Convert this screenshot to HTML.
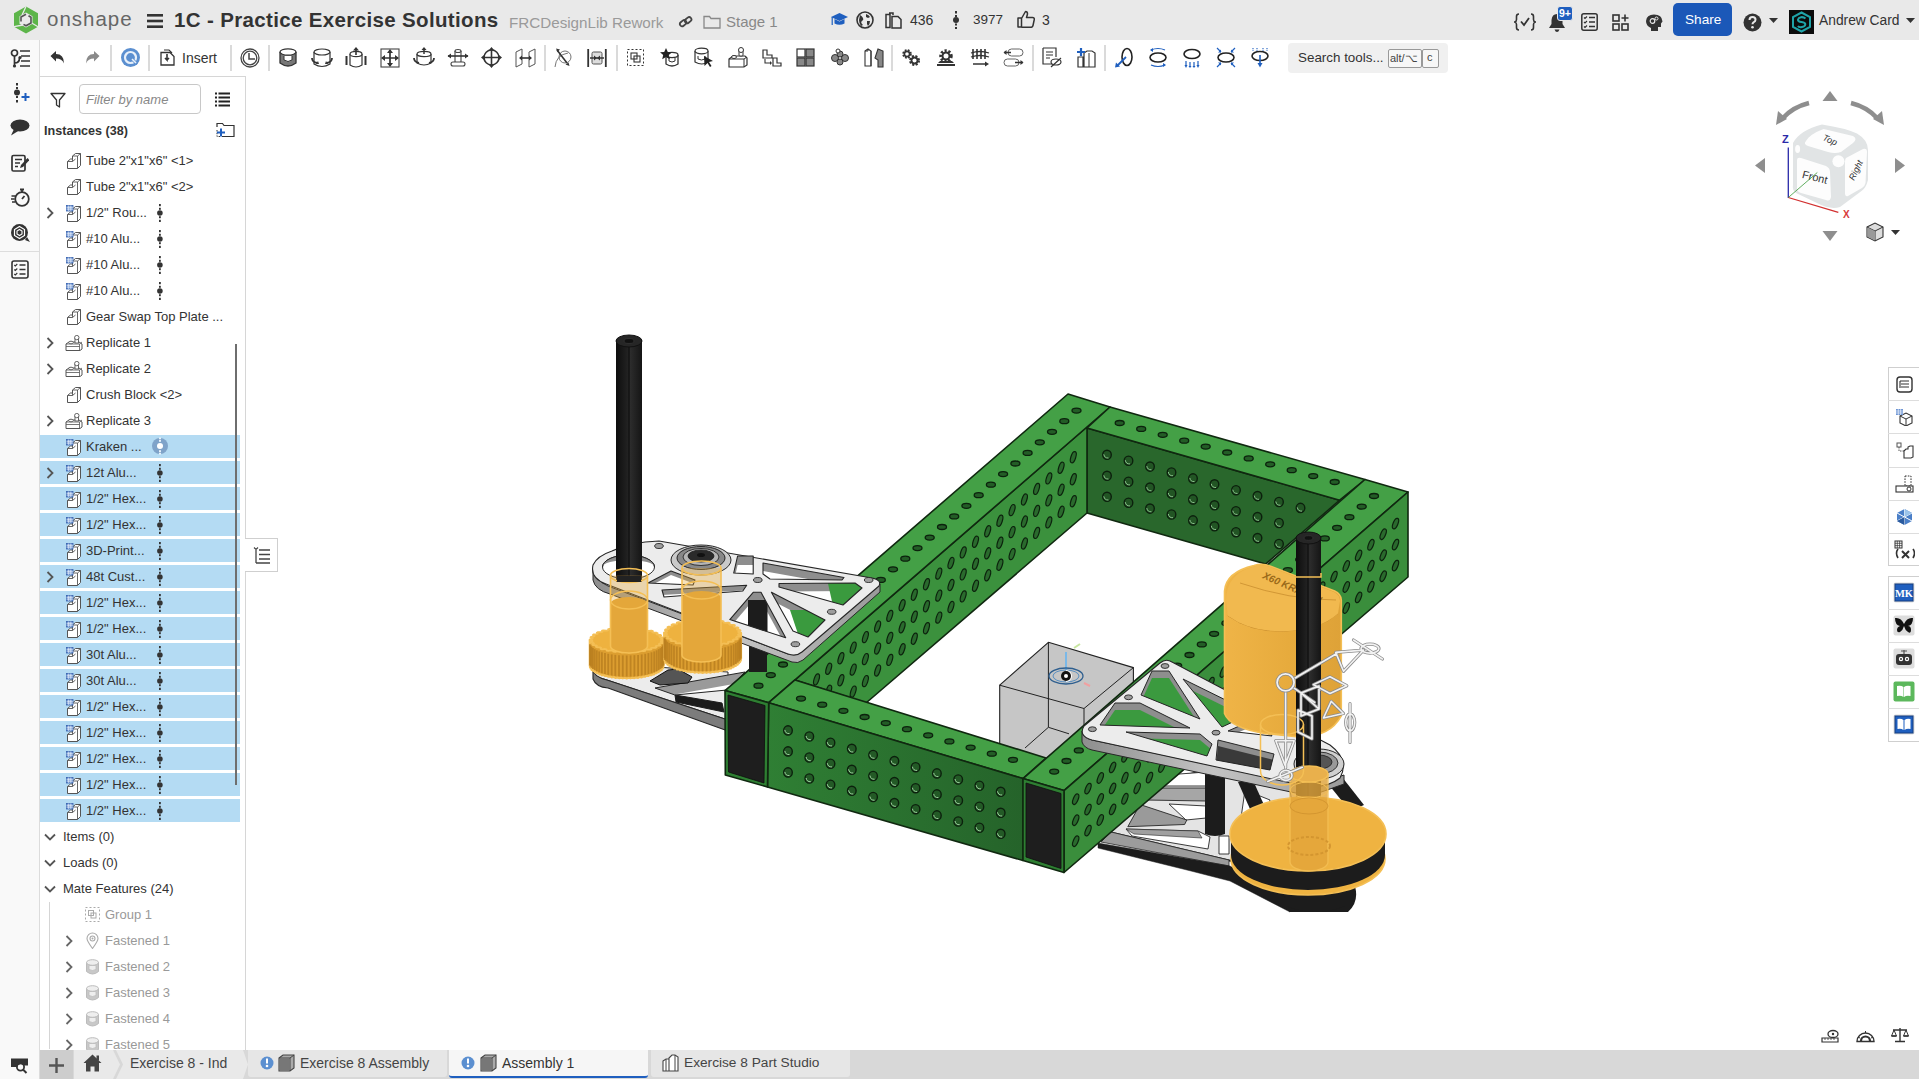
<!DOCTYPE html>
<html><head><meta charset="utf-8">
<style>
*{box-sizing:border-box;margin:0;padding:0}
html,body{width:1919px;height:1079px;overflow:hidden;background:#fff;font-family:"Liberation Sans",sans-serif;color:#333}
.a{position:absolute}
#top{left:0;top:0;width:1919px;height:40px;background:#e9e9e9}
#strip{left:0;top:40px;width:40px;height:1039px;background:#f9f9f9;border-right:1px solid #dcdcdc}
#panel{left:40px;top:76px;width:206px;height:974px;background:#fff;border-top:1px solid #d6d6d6;border-right:1px solid #d6d6d6}
#bot{left:40px;top:1050px;width:1879px;height:29px;background:#d8d8d8}
.t{position:absolute;white-space:nowrap;line-height:1}
.sep{position:absolute;top:45px;width:2px;height:26px;background:#dadada}
.row{position:absolute;left:40px;width:200px;height:23px}
.sel{background:#b4dbf3}
.rt{position:absolute;left:86px;font-size:13px;color:#333;white-space:nowrap;line-height:1}
</style></head><body>
<div id="top" class="a"></div>
<div id="strip" class="a"></div>
<div id="panel" class="a"></div>
<div id="bot" class="a"></div>
<svg class="a" style="left:0;top:0" width="1919" height="1079" viewBox="0 0 1919 1079">
<defs>
<linearGradient id="gf" x1="0" y1="0" x2="1" y2="0"><stop offset="0" stop-color="#2f7f34"/><stop offset="1" stop-color="#25632a"/></linearGradient>
<linearGradient id="gside" x1="0" y1="0" x2="1" y2="0"><stop offset="0" stop-color="#8e8e8e"/><stop offset="0.5" stop-color="#c4c4c4"/><stop offset="1" stop-color="#9a9a9a"/></linearGradient>
<linearGradient id="gshaft" x1="0" y1="0" x2="1" y2="0"><stop offset="0" stop-color="#0d0d0d"/><stop offset="0.45" stop-color="#222"/><stop offset="0.55" stop-color="#2c2c2c"/><stop offset="1" stop-color="#151515"/></linearGradient>
<linearGradient id="gmot" x1="0" y1="0" x2="1" y2="0"><stop offset="0" stop-color="#efb447"/><stop offset="0.6" stop-color="#e6aa3c"/><stop offset="1" stop-color="#dea238"/></linearGradient>
</defs>
<path d="M1096,840 L1232,862 Q1262,880 1290,912 L1348,912 Q1362,900 1352,878 L1300,866 L1232,858 L1100,838 Z" fill="#1c1c1c" stroke="none" stroke-width="1" stroke-linejoin="round" />
<path d="M1325,780 L1342,777 L1364,805 L1350,811 Z" fill="#1c1c1c" stroke="none" stroke-width="1" stroke-linejoin="round" />
<polygon points="1070.0,800.0 1206.0,770.0 1290.0,790.0 1300.0,862.0 1229.0,860.0 1111.0,832.0 1070.0,822.0" fill="#e4e4e4" stroke="#262626" stroke-width="1" stroke-linejoin="round" />
<polygon points="1111.0,832.0 1229.0,860.0 1229.0,866.0 1101.0,842.0" fill="#9c9c9c" stroke="#262626" stroke-width="0.8" stroke-linejoin="round" />
<polygon points="1098.0,843.0 1230.0,866.0 1290.0,900.0 1290.0,912.0 1230.0,881.0 1191.0,871.0 1098.0,848.0" fill="#1c1c1c" stroke="#1c1c1c" stroke-width="0.5" stroke-linejoin="round" />
<polygon points="1166.0,775.0 1206.0,772.0 1206.0,786.0 1160.0,786.0" fill="#ffffff" stroke="#262626" stroke-width="0.9" stroke-linejoin="round" />
<polygon points="1150.0,788.0 1206.0,788.0 1206.0,801.0 1145.0,800.0" fill="#a6a6a6" stroke="#262626" stroke-width="0.9" stroke-linejoin="round" />
<polygon points="1169.0,804.0 1206.0,806.0 1206.0,818.0 1186.0,820.0" fill="#ffffff" stroke="#262626" stroke-width="0.9" stroke-linejoin="round" />
<polygon points="1140.0,804.5 1186.8,820.0 1184.6,824.5 1127.8,826.7" fill="#9a9a9a" stroke="#262626" stroke-width="0.9" stroke-linejoin="round" />
<polygon points="1126.0,829.0 1198.0,831.0 1210.0,837.0 1208.0,849.0 1132.0,836.0" fill="#ffffff" stroke="#262626" stroke-width="0.9" stroke-linejoin="round" />
<polygon points="1126.0,829.0 1198.0,831.0 1202.0,838.0 1134.0,834.0" fill="#a0a0a0" stroke="#262626" stroke-width="0.6" stroke-linejoin="round" />
<polygon points="1219.0,836.0 1229.0,836.0 1229.0,854.0 1219.0,854.0" fill="#ffffff" stroke="#262626" stroke-width="0.9" stroke-linejoin="round" />
<polygon points="1245.0,790.0 1270.0,800.0 1262.0,830.0 1240.0,825.0" fill="#ffffff" stroke="#262626" stroke-width="0.9" stroke-linejoin="round" />
<path d="M612,664 L728,672 L728,720 L607,680 Q592,676 593,670 Q596,664 612,664 Z" fill="#ececec" stroke="#262626" stroke-width="1" stroke-linejoin="round" />
<path d="M593,670 L593,679 Q596,687 608,688 L728,731 L728,720 L607,680 Q594,677 593,670 Z" fill="#7c7c7c" stroke="#262626" stroke-width="1.1" stroke-linejoin="round" />
<clipPath id="c1"><polygon points="655.0,688.0 745.0,672.0 727.0,690.0 675.0,695.0"/></clipPath>
<polygon points="655.0,688.0 745.0,672.0 727.0,690.0 675.0,695.0" fill="#9a9a9a"/>
<g clip-path="url(#c1)">
<polygon points="655.0,698.0 745.0,682.0 727.0,700.0 675.0,705.0" fill="#ffffff"/>
</g>
<polygon points="655.0,688.0 745.0,672.0 727.0,690.0 675.0,695.0" fill="none" stroke="#262626" stroke-width="1" stroke-linejoin="round"/>
<polygon points="675.0,695.0 722.0,703.0 724.0,712.0 676.0,702.0" fill="#1c1c1c" stroke="#1c1c1c" stroke-width="1" stroke-linejoin="round" />
<polygon points="650.0,681.0 668.0,670.0 678.0,669.0 692.0,677.0 688.0,683.0 660.0,685.0" fill="#555" stroke="#111" stroke-width="1" stroke-linejoin="round" />
<polygon points="1087.0,428.0 1339.7,500.2 1265.6,564.1 1087.0,513.0" fill="#29672c" stroke="#102810" stroke-width="1.6" stroke-linejoin="round" />
<ellipse cx="1107.0" cy="454.8" rx="4.3" ry="4.6" fill="#225524" stroke="#0c200d" stroke-width="1.4" />
<path d="M1103.8,454.3 Q1104.5,458.3 1108.5,458.0" fill="none" stroke="#8cc08e" stroke-width="1"/>
<ellipse cx="1107.0" cy="475.8" rx="4.3" ry="4.6" fill="#225524" stroke="#0c200d" stroke-width="1.4" />
<path d="M1103.8,475.3 Q1104.5,479.3 1108.5,479.0" fill="none" stroke="#8cc08e" stroke-width="1"/>
<ellipse cx="1107.0" cy="496.8" rx="4.3" ry="4.6" fill="#225524" stroke="#0c200d" stroke-width="1.4" />
<path d="M1103.8,496.3 Q1104.5,500.3 1108.5,500.0" fill="none" stroke="#8cc08e" stroke-width="1"/>
<ellipse cx="1128.5" cy="460.7" rx="4.3" ry="4.6" fill="#225524" stroke="#0c200d" stroke-width="1.4" />
<path d="M1125.3,460.2 Q1126.0,464.2 1130.0,463.9" fill="none" stroke="#8cc08e" stroke-width="1"/>
<ellipse cx="1128.5" cy="481.7" rx="4.3" ry="4.6" fill="#225524" stroke="#0c200d" stroke-width="1.4" />
<path d="M1125.3,481.2 Q1126.0,485.2 1130.0,484.9" fill="none" stroke="#8cc08e" stroke-width="1"/>
<ellipse cx="1128.5" cy="502.7" rx="4.3" ry="4.6" fill="#225524" stroke="#0c200d" stroke-width="1.4" />
<path d="M1125.3,502.2 Q1126.0,506.2 1130.0,505.9" fill="none" stroke="#8cc08e" stroke-width="1"/>
<ellipse cx="1150.0" cy="466.6" rx="4.3" ry="4.6" fill="#225524" stroke="#0c200d" stroke-width="1.4" />
<path d="M1146.8,466.1 Q1147.5,470.1 1151.5,469.8" fill="none" stroke="#8cc08e" stroke-width="1"/>
<ellipse cx="1150.0" cy="487.6" rx="4.3" ry="4.6" fill="#225524" stroke="#0c200d" stroke-width="1.4" />
<path d="M1146.8,487.1 Q1147.5,491.1 1151.5,490.8" fill="none" stroke="#8cc08e" stroke-width="1"/>
<ellipse cx="1150.0" cy="508.6" rx="4.3" ry="4.6" fill="#225524" stroke="#0c200d" stroke-width="1.4" />
<path d="M1146.8,508.1 Q1147.5,512.1 1151.5,511.8" fill="none" stroke="#8cc08e" stroke-width="1"/>
<ellipse cx="1171.5" cy="472.5" rx="4.3" ry="4.6" fill="#225524" stroke="#0c200d" stroke-width="1.4" />
<path d="M1168.3,472.0 Q1169.0,476.0 1173.0,475.7" fill="none" stroke="#8cc08e" stroke-width="1"/>
<ellipse cx="1171.5" cy="493.5" rx="4.3" ry="4.6" fill="#225524" stroke="#0c200d" stroke-width="1.4" />
<path d="M1168.3,493.0 Q1169.0,497.0 1173.0,496.7" fill="none" stroke="#8cc08e" stroke-width="1"/>
<ellipse cx="1171.5" cy="514.5" rx="4.3" ry="4.6" fill="#225524" stroke="#0c200d" stroke-width="1.4" />
<path d="M1168.3,514.0 Q1169.0,518.0 1173.0,517.7" fill="none" stroke="#8cc08e" stroke-width="1"/>
<ellipse cx="1193.0" cy="478.4" rx="4.3" ry="4.6" fill="#225524" stroke="#0c200d" stroke-width="1.4" />
<path d="M1189.8,477.9 Q1190.5,481.9 1194.5,481.6" fill="none" stroke="#8cc08e" stroke-width="1"/>
<ellipse cx="1193.0" cy="499.4" rx="4.3" ry="4.6" fill="#225524" stroke="#0c200d" stroke-width="1.4" />
<path d="M1189.8,498.9 Q1190.5,502.9 1194.5,502.6" fill="none" stroke="#8cc08e" stroke-width="1"/>
<ellipse cx="1193.0" cy="520.4" rx="4.3" ry="4.6" fill="#225524" stroke="#0c200d" stroke-width="1.4" />
<path d="M1189.8,519.9 Q1190.5,523.9 1194.5,523.6" fill="none" stroke="#8cc08e" stroke-width="1"/>
<ellipse cx="1214.5" cy="484.3" rx="4.3" ry="4.6" fill="#225524" stroke="#0c200d" stroke-width="1.4" />
<path d="M1211.3,483.8 Q1212.0,487.8 1216.0,487.5" fill="none" stroke="#8cc08e" stroke-width="1"/>
<ellipse cx="1214.5" cy="505.3" rx="4.3" ry="4.6" fill="#225524" stroke="#0c200d" stroke-width="1.4" />
<path d="M1211.3,504.8 Q1212.0,508.8 1216.0,508.5" fill="none" stroke="#8cc08e" stroke-width="1"/>
<ellipse cx="1214.5" cy="526.3" rx="4.3" ry="4.6" fill="#225524" stroke="#0c200d" stroke-width="1.4" />
<path d="M1211.3,525.8 Q1212.0,529.8 1216.0,529.5" fill="none" stroke="#8cc08e" stroke-width="1"/>
<ellipse cx="1236.0" cy="490.2" rx="4.3" ry="4.6" fill="#225524" stroke="#0c200d" stroke-width="1.4" />
<path d="M1232.8,489.7 Q1233.5,493.7 1237.5,493.4" fill="none" stroke="#8cc08e" stroke-width="1"/>
<ellipse cx="1236.0" cy="511.2" rx="4.3" ry="4.6" fill="#225524" stroke="#0c200d" stroke-width="1.4" />
<path d="M1232.8,510.7 Q1233.5,514.7 1237.5,514.4" fill="none" stroke="#8cc08e" stroke-width="1"/>
<ellipse cx="1236.0" cy="532.2" rx="4.3" ry="4.6" fill="#225524" stroke="#0c200d" stroke-width="1.4" />
<path d="M1232.8,531.7 Q1233.5,535.7 1237.5,535.4" fill="none" stroke="#8cc08e" stroke-width="1"/>
<ellipse cx="1257.5" cy="496.1" rx="4.3" ry="4.6" fill="#225524" stroke="#0c200d" stroke-width="1.4" />
<path d="M1254.3,495.6 Q1255.0,499.6 1259.0,499.3" fill="none" stroke="#8cc08e" stroke-width="1"/>
<ellipse cx="1257.5" cy="517.1" rx="4.3" ry="4.6" fill="#225524" stroke="#0c200d" stroke-width="1.4" />
<path d="M1254.3,516.6 Q1255.0,520.6 1259.0,520.3" fill="none" stroke="#8cc08e" stroke-width="1"/>
<ellipse cx="1257.5" cy="538.1" rx="4.3" ry="4.6" fill="#225524" stroke="#0c200d" stroke-width="1.4" />
<path d="M1254.3,537.6 Q1255.0,541.6 1259.0,541.3" fill="none" stroke="#8cc08e" stroke-width="1"/>
<ellipse cx="1279.0" cy="502.0" rx="4.3" ry="4.6" fill="#225524" stroke="#0c200d" stroke-width="1.4" />
<path d="M1275.8,501.5 Q1276.5,505.5 1280.5,505.2" fill="none" stroke="#8cc08e" stroke-width="1"/>
<ellipse cx="1279.0" cy="523.0" rx="4.3" ry="4.6" fill="#225524" stroke="#0c200d" stroke-width="1.4" />
<path d="M1275.8,522.5 Q1276.5,526.5 1280.5,526.2" fill="none" stroke="#8cc08e" stroke-width="1"/>
<ellipse cx="1279.0" cy="544.0" rx="4.3" ry="4.6" fill="#225524" stroke="#0c200d" stroke-width="1.4" />
<path d="M1275.8,543.5 Q1276.5,547.5 1280.5,547.2" fill="none" stroke="#8cc08e" stroke-width="1"/>
<ellipse cx="1300.5" cy="507.9" rx="4.3" ry="4.6" fill="#225524" stroke="#0c200d" stroke-width="1.4" />
<path d="M1297.3,507.4 Q1298.0,511.4 1302.0,511.1" fill="none" stroke="#8cc08e" stroke-width="1"/>
<polygon points="795.0,679.9 1087.0,426.9 1087.0,513.0 866.0,703.0" fill="#3b913d" stroke="#102810" stroke-width="1.6" stroke-linejoin="round" />
<ellipse cx="1073.3" cy="457.2" rx="2.4" ry="5.8" fill="#2a6a2d" stroke="#0c220d" stroke-width="1.2" transform="rotate(18 1073.3 457.2)" />
<ellipse cx="1073.3" cy="479.2" rx="2.4" ry="5.8" fill="#2a6a2d" stroke="#0c220d" stroke-width="1.2" transform="rotate(18 1073.3 479.2)" />
<ellipse cx="1073.3" cy="501.2" rx="2.4" ry="5.8" fill="#2a6a2d" stroke="#0c220d" stroke-width="1.2" transform="rotate(18 1073.3 501.2)" />
<ellipse cx="1061.1" cy="467.8" rx="2.4" ry="5.8" fill="#2a6a2d" stroke="#0c220d" stroke-width="1.2" transform="rotate(18 1061.1 467.8)" />
<ellipse cx="1061.1" cy="489.8" rx="2.4" ry="5.8" fill="#2a6a2d" stroke="#0c220d" stroke-width="1.2" transform="rotate(18 1061.1 489.8)" />
<ellipse cx="1061.1" cy="511.8" rx="2.4" ry="5.8" fill="#2a6a2d" stroke="#0c220d" stroke-width="1.2" transform="rotate(18 1061.1 511.8)" />
<ellipse cx="1048.8" cy="478.4" rx="2.4" ry="5.8" fill="#2a6a2d" stroke="#0c220d" stroke-width="1.2" transform="rotate(18 1048.8 478.4)" />
<ellipse cx="1048.8" cy="500.4" rx="2.4" ry="5.8" fill="#2a6a2d" stroke="#0c220d" stroke-width="1.2" transform="rotate(18 1048.8 500.4)" />
<ellipse cx="1048.8" cy="522.4" rx="2.4" ry="5.8" fill="#2a6a2d" stroke="#0c220d" stroke-width="1.2" transform="rotate(18 1048.8 522.4)" />
<ellipse cx="1036.6" cy="488.9" rx="2.4" ry="5.8" fill="#2a6a2d" stroke="#0c220d" stroke-width="1.2" transform="rotate(18 1036.6 488.9)" />
<ellipse cx="1036.6" cy="510.9" rx="2.4" ry="5.8" fill="#2a6a2d" stroke="#0c220d" stroke-width="1.2" transform="rotate(18 1036.6 510.9)" />
<ellipse cx="1036.6" cy="532.9" rx="2.4" ry="5.8" fill="#2a6a2d" stroke="#0c220d" stroke-width="1.2" transform="rotate(18 1036.6 532.9)" />
<ellipse cx="1024.4" cy="499.5" rx="2.4" ry="5.8" fill="#2a6a2d" stroke="#0c220d" stroke-width="1.2" transform="rotate(18 1024.4 499.5)" />
<ellipse cx="1024.4" cy="521.5" rx="2.4" ry="5.8" fill="#2a6a2d" stroke="#0c220d" stroke-width="1.2" transform="rotate(18 1024.4 521.5)" />
<ellipse cx="1024.4" cy="543.5" rx="2.4" ry="5.8" fill="#2a6a2d" stroke="#0c220d" stroke-width="1.2" transform="rotate(18 1024.4 543.5)" />
<ellipse cx="1012.1" cy="510.1" rx="2.4" ry="5.8" fill="#2a6a2d" stroke="#0c220d" stroke-width="1.2" transform="rotate(18 1012.1 510.1)" />
<ellipse cx="1012.1" cy="532.1" rx="2.4" ry="5.8" fill="#2a6a2d" stroke="#0c220d" stroke-width="1.2" transform="rotate(18 1012.1 532.1)" />
<ellipse cx="1012.1" cy="554.1" rx="2.4" ry="5.8" fill="#2a6a2d" stroke="#0c220d" stroke-width="1.2" transform="rotate(18 1012.1 554.1)" />
<ellipse cx="999.9" cy="520.7" rx="2.4" ry="5.8" fill="#2a6a2d" stroke="#0c220d" stroke-width="1.2" transform="rotate(18 999.9 520.7)" />
<ellipse cx="999.9" cy="542.7" rx="2.4" ry="5.8" fill="#2a6a2d" stroke="#0c220d" stroke-width="1.2" transform="rotate(18 999.9 542.7)" />
<ellipse cx="999.9" cy="564.7" rx="2.4" ry="5.8" fill="#2a6a2d" stroke="#0c220d" stroke-width="1.2" transform="rotate(18 999.9 564.7)" />
<ellipse cx="987.7" cy="531.3" rx="2.4" ry="5.8" fill="#2a6a2d" stroke="#0c220d" stroke-width="1.2" transform="rotate(18 987.7 531.3)" />
<ellipse cx="987.7" cy="553.3" rx="2.4" ry="5.8" fill="#2a6a2d" stroke="#0c220d" stroke-width="1.2" transform="rotate(18 987.7 553.3)" />
<ellipse cx="987.7" cy="575.3" rx="2.4" ry="5.8" fill="#2a6a2d" stroke="#0c220d" stroke-width="1.2" transform="rotate(18 987.7 575.3)" />
<ellipse cx="975.5" cy="541.8" rx="2.4" ry="5.8" fill="#2a6a2d" stroke="#0c220d" stroke-width="1.2" transform="rotate(18 975.5 541.8)" />
<ellipse cx="975.5" cy="563.8" rx="2.4" ry="5.8" fill="#2a6a2d" stroke="#0c220d" stroke-width="1.2" transform="rotate(18 975.5 563.8)" />
<ellipse cx="975.5" cy="585.8" rx="2.4" ry="5.8" fill="#2a6a2d" stroke="#0c220d" stroke-width="1.2" transform="rotate(18 975.5 585.8)" />
<ellipse cx="963.2" cy="552.4" rx="2.4" ry="5.8" fill="#2a6a2d" stroke="#0c220d" stroke-width="1.2" transform="rotate(18 963.2 552.4)" />
<ellipse cx="963.2" cy="574.4" rx="2.4" ry="5.8" fill="#2a6a2d" stroke="#0c220d" stroke-width="1.2" transform="rotate(18 963.2 574.4)" />
<ellipse cx="963.2" cy="596.4" rx="2.4" ry="5.8" fill="#2a6a2d" stroke="#0c220d" stroke-width="1.2" transform="rotate(18 963.2 596.4)" />
<ellipse cx="951.0" cy="563.0" rx="2.4" ry="5.8" fill="#2a6a2d" stroke="#0c220d" stroke-width="1.2" transform="rotate(18 951.0 563.0)" />
<ellipse cx="951.0" cy="585.0" rx="2.4" ry="5.8" fill="#2a6a2d" stroke="#0c220d" stroke-width="1.2" transform="rotate(18 951.0 585.0)" />
<ellipse cx="951.0" cy="607.0" rx="2.4" ry="5.8" fill="#2a6a2d" stroke="#0c220d" stroke-width="1.2" transform="rotate(18 951.0 607.0)" />
<ellipse cx="938.8" cy="573.6" rx="2.4" ry="5.8" fill="#2a6a2d" stroke="#0c220d" stroke-width="1.2" transform="rotate(18 938.8 573.6)" />
<ellipse cx="938.8" cy="595.6" rx="2.4" ry="5.8" fill="#2a6a2d" stroke="#0c220d" stroke-width="1.2" transform="rotate(18 938.8 595.6)" />
<ellipse cx="938.8" cy="617.6" rx="2.4" ry="5.8" fill="#2a6a2d" stroke="#0c220d" stroke-width="1.2" transform="rotate(18 938.8 617.6)" />
<ellipse cx="926.5" cy="584.2" rx="2.4" ry="5.8" fill="#2a6a2d" stroke="#0c220d" stroke-width="1.2" transform="rotate(18 926.5 584.2)" />
<ellipse cx="926.5" cy="606.2" rx="2.4" ry="5.8" fill="#2a6a2d" stroke="#0c220d" stroke-width="1.2" transform="rotate(18 926.5 606.2)" />
<ellipse cx="926.5" cy="628.2" rx="2.4" ry="5.8" fill="#2a6a2d" stroke="#0c220d" stroke-width="1.2" transform="rotate(18 926.5 628.2)" />
<ellipse cx="914.3" cy="594.7" rx="2.4" ry="5.8" fill="#2a6a2d" stroke="#0c220d" stroke-width="1.2" transform="rotate(18 914.3 594.7)" />
<ellipse cx="914.3" cy="616.7" rx="2.4" ry="5.8" fill="#2a6a2d" stroke="#0c220d" stroke-width="1.2" transform="rotate(18 914.3 616.7)" />
<ellipse cx="914.3" cy="638.7" rx="2.4" ry="5.8" fill="#2a6a2d" stroke="#0c220d" stroke-width="1.2" transform="rotate(18 914.3 638.7)" />
<ellipse cx="902.1" cy="605.3" rx="2.4" ry="5.8" fill="#2a6a2d" stroke="#0c220d" stroke-width="1.2" transform="rotate(18 902.1 605.3)" />
<ellipse cx="902.1" cy="627.3" rx="2.4" ry="5.8" fill="#2a6a2d" stroke="#0c220d" stroke-width="1.2" transform="rotate(18 902.1 627.3)" />
<ellipse cx="902.1" cy="649.3" rx="2.4" ry="5.8" fill="#2a6a2d" stroke="#0c220d" stroke-width="1.2" transform="rotate(18 902.1 649.3)" />
<ellipse cx="889.8" cy="615.9" rx="2.4" ry="5.8" fill="#2a6a2d" stroke="#0c220d" stroke-width="1.2" transform="rotate(18 889.8 615.9)" />
<ellipse cx="889.8" cy="637.9" rx="2.4" ry="5.8" fill="#2a6a2d" stroke="#0c220d" stroke-width="1.2" transform="rotate(18 889.8 637.9)" />
<ellipse cx="889.8" cy="659.9" rx="2.4" ry="5.8" fill="#2a6a2d" stroke="#0c220d" stroke-width="1.2" transform="rotate(18 889.8 659.9)" />
<ellipse cx="877.6" cy="626.5" rx="2.4" ry="5.8" fill="#2a6a2d" stroke="#0c220d" stroke-width="1.2" transform="rotate(18 877.6 626.5)" />
<ellipse cx="877.6" cy="648.5" rx="2.4" ry="5.8" fill="#2a6a2d" stroke="#0c220d" stroke-width="1.2" transform="rotate(18 877.6 648.5)" />
<ellipse cx="877.6" cy="670.5" rx="2.4" ry="5.8" fill="#2a6a2d" stroke="#0c220d" stroke-width="1.2" transform="rotate(18 877.6 670.5)" />
<ellipse cx="865.4" cy="637.1" rx="2.4" ry="5.8" fill="#2a6a2d" stroke="#0c220d" stroke-width="1.2" transform="rotate(18 865.4 637.1)" />
<ellipse cx="865.4" cy="659.1" rx="2.4" ry="5.8" fill="#2a6a2d" stroke="#0c220d" stroke-width="1.2" transform="rotate(18 865.4 659.1)" />
<ellipse cx="865.4" cy="681.1" rx="2.4" ry="5.8" fill="#2a6a2d" stroke="#0c220d" stroke-width="1.2" transform="rotate(18 865.4 681.1)" />
<ellipse cx="853.2" cy="647.6" rx="2.4" ry="5.8" fill="#2a6a2d" stroke="#0c220d" stroke-width="1.2" transform="rotate(18 853.2 647.6)" />
<ellipse cx="853.2" cy="669.6" rx="2.4" ry="5.8" fill="#2a6a2d" stroke="#0c220d" stroke-width="1.2" transform="rotate(18 853.2 669.6)" />
<ellipse cx="853.2" cy="691.6" rx="2.4" ry="5.8" fill="#2a6a2d" stroke="#0c220d" stroke-width="1.2" transform="rotate(18 853.2 691.6)" />
<ellipse cx="840.9" cy="658.2" rx="2.4" ry="5.8" fill="#2a6a2d" stroke="#0c220d" stroke-width="1.2" transform="rotate(18 840.9 658.2)" />
<ellipse cx="840.9" cy="680.2" rx="2.4" ry="5.8" fill="#2a6a2d" stroke="#0c220d" stroke-width="1.2" transform="rotate(18 840.9 680.2)" />
<ellipse cx="840.9" cy="702.2" rx="2.4" ry="5.8" fill="#2a6a2d" stroke="#0c220d" stroke-width="1.2" transform="rotate(18 840.9 702.2)" />
<ellipse cx="828.7" cy="668.8" rx="2.4" ry="5.8" fill="#2a6a2d" stroke="#0c220d" stroke-width="1.2" transform="rotate(18 828.7 668.8)" />
<ellipse cx="828.7" cy="690.8" rx="2.4" ry="5.8" fill="#2a6a2d" stroke="#0c220d" stroke-width="1.2" transform="rotate(18 828.7 690.8)" />
<ellipse cx="828.7" cy="712.8" rx="2.4" ry="5.8" fill="#2a6a2d" stroke="#0c220d" stroke-width="1.2" transform="rotate(18 828.7 712.8)" />
<ellipse cx="816.5" cy="679.4" rx="2.4" ry="5.8" fill="#2a6a2d" stroke="#0c220d" stroke-width="1.2" transform="rotate(18 816.5 679.4)" />
<ellipse cx="816.5" cy="701.4" rx="2.4" ry="5.8" fill="#2a6a2d" stroke="#0c220d" stroke-width="1.2" transform="rotate(18 816.5 701.4)" />
<ellipse cx="816.5" cy="723.4" rx="2.4" ry="5.8" fill="#2a6a2d" stroke="#0c220d" stroke-width="1.2" transform="rotate(18 816.5 723.4)" />
<ellipse cx="804.2" cy="690.0" rx="2.4" ry="5.8" fill="#2a6a2d" stroke="#0c220d" stroke-width="1.2" transform="rotate(18 804.2 690.0)" />
<ellipse cx="804.2" cy="712.0" rx="2.4" ry="5.8" fill="#2a6a2d" stroke="#0c220d" stroke-width="1.2" transform="rotate(18 804.2 712.0)" />
<ellipse cx="804.2" cy="734.0" rx="2.4" ry="5.8" fill="#2a6a2d" stroke="#0c220d" stroke-width="1.2" transform="rotate(18 804.2 734.0)" />
<ellipse cx="792.0" cy="700.5" rx="2.4" ry="5.8" fill="#2a6a2d" stroke="#0c220d" stroke-width="1.2" transform="rotate(18 792.0 700.5)" />
<ellipse cx="792.0" cy="722.5" rx="2.4" ry="5.8" fill="#2a6a2d" stroke="#0c220d" stroke-width="1.2" transform="rotate(18 792.0 722.5)" />
<ellipse cx="792.0" cy="744.5" rx="2.4" ry="5.8" fill="#2a6a2d" stroke="#0c220d" stroke-width="1.2" transform="rotate(18 792.0 744.5)" />
<ellipse cx="779.8" cy="711.1" rx="2.4" ry="5.8" fill="#2a6a2d" stroke="#0c220d" stroke-width="1.2" transform="rotate(18 779.8 711.1)" />
<ellipse cx="779.8" cy="733.1" rx="2.4" ry="5.8" fill="#2a6a2d" stroke="#0c220d" stroke-width="1.2" transform="rotate(18 779.8 733.1)" />
<ellipse cx="779.8" cy="755.1" rx="2.4" ry="5.8" fill="#2a6a2d" stroke="#0c220d" stroke-width="1.2" transform="rotate(18 779.8 755.1)" />
<ellipse cx="767.5" cy="721.7" rx="2.4" ry="5.8" fill="#2a6a2d" stroke="#0c220d" stroke-width="1.2" transform="rotate(18 767.5 721.7)" />
<ellipse cx="767.5" cy="743.7" rx="2.4" ry="5.8" fill="#2a6a2d" stroke="#0c220d" stroke-width="1.2" transform="rotate(18 767.5 743.7)" />
<ellipse cx="767.5" cy="765.7" rx="2.4" ry="5.8" fill="#2a6a2d" stroke="#0c220d" stroke-width="1.2" transform="rotate(18 767.5 765.7)" />
<polygon points="725.0,690.6 768.7,702.7 1110.0,407.0 1068.0,394.0" fill="#44a046" stroke="#102810" stroke-width="1.6" stroke-linejoin="round" />
<ellipse cx="1076.5" cy="410.6" rx="4.5" ry="2.5" fill="#235d26" stroke="#0c220d" stroke-width="1.3" />
<ellipse cx="1064.3" cy="421.2" rx="4.5" ry="2.5" fill="#235d26" stroke="#0c220d" stroke-width="1.3" />
<ellipse cx="1052.0" cy="431.8" rx="4.5" ry="2.5" fill="#235d26" stroke="#0c220d" stroke-width="1.3" />
<ellipse cx="1039.8" cy="442.3" rx="4.5" ry="2.5" fill="#235d26" stroke="#0c220d" stroke-width="1.3" />
<ellipse cx="1027.6" cy="452.9" rx="4.5" ry="2.5" fill="#235d26" stroke="#0c220d" stroke-width="1.3" />
<ellipse cx="1015.4" cy="463.5" rx="4.5" ry="2.5" fill="#235d26" stroke="#0c220d" stroke-width="1.3" />
<ellipse cx="1003.1" cy="474.1" rx="4.5" ry="2.5" fill="#235d26" stroke="#0c220d" stroke-width="1.3" />
<ellipse cx="990.9" cy="484.7" rx="4.5" ry="2.5" fill="#235d26" stroke="#0c220d" stroke-width="1.3" />
<ellipse cx="978.7" cy="495.2" rx="4.5" ry="2.5" fill="#235d26" stroke="#0c220d" stroke-width="1.3" />
<ellipse cx="966.4" cy="505.8" rx="4.5" ry="2.5" fill="#235d26" stroke="#0c220d" stroke-width="1.3" />
<ellipse cx="954.2" cy="516.4" rx="4.5" ry="2.5" fill="#235d26" stroke="#0c220d" stroke-width="1.3" />
<ellipse cx="942.0" cy="527.0" rx="4.5" ry="2.5" fill="#235d26" stroke="#0c220d" stroke-width="1.3" />
<ellipse cx="929.7" cy="537.6" rx="4.5" ry="2.5" fill="#235d26" stroke="#0c220d" stroke-width="1.3" />
<ellipse cx="917.5" cy="548.1" rx="4.5" ry="2.5" fill="#235d26" stroke="#0c220d" stroke-width="1.3" />
<ellipse cx="905.3" cy="558.7" rx="4.5" ry="2.5" fill="#235d26" stroke="#0c220d" stroke-width="1.3" />
<ellipse cx="893.0" cy="569.3" rx="4.5" ry="2.5" fill="#235d26" stroke="#0c220d" stroke-width="1.3" />
<ellipse cx="880.8" cy="579.9" rx="4.5" ry="2.5" fill="#235d26" stroke="#0c220d" stroke-width="1.3" />
<ellipse cx="868.6" cy="590.5" rx="4.5" ry="2.5" fill="#235d26" stroke="#0c220d" stroke-width="1.3" />
<ellipse cx="856.4" cy="601.0" rx="4.5" ry="2.5" fill="#235d26" stroke="#0c220d" stroke-width="1.3" />
<ellipse cx="844.1" cy="611.6" rx="4.5" ry="2.5" fill="#235d26" stroke="#0c220d" stroke-width="1.3" />
<ellipse cx="831.9" cy="622.2" rx="4.5" ry="2.5" fill="#235d26" stroke="#0c220d" stroke-width="1.3" />
<ellipse cx="819.7" cy="632.8" rx="4.5" ry="2.5" fill="#235d26" stroke="#0c220d" stroke-width="1.3" />
<ellipse cx="807.4" cy="643.4" rx="4.5" ry="2.5" fill="#235d26" stroke="#0c220d" stroke-width="1.3" />
<ellipse cx="795.2" cy="653.9" rx="4.5" ry="2.5" fill="#235d26" stroke="#0c220d" stroke-width="1.3" />
<ellipse cx="783.0" cy="664.5" rx="4.5" ry="2.5" fill="#235d26" stroke="#0c220d" stroke-width="1.3" />
<ellipse cx="770.8" cy="675.1" rx="4.5" ry="2.5" fill="#235d26" stroke="#0c220d" stroke-width="1.3" />
<ellipse cx="758.5" cy="685.7" rx="4.5" ry="2.5" fill="#235d26" stroke="#0c220d" stroke-width="1.3" />
<polygon points="1110.0,407.0 1365.0,479.5 1339.7,500.2 1087.0,428.0" fill="#44a046" stroke="#102810" stroke-width="1.6" stroke-linejoin="round" />
<ellipse cx="1119.7" cy="423.0" rx="4.5" ry="2.5" fill="#235d26" stroke="#0c220d" stroke-width="1.3" />
<ellipse cx="1141.2" cy="428.9" rx="4.5" ry="2.5" fill="#235d26" stroke="#0c220d" stroke-width="1.3" />
<ellipse cx="1162.7" cy="434.8" rx="4.5" ry="2.5" fill="#235d26" stroke="#0c220d" stroke-width="1.3" />
<ellipse cx="1184.2" cy="440.7" rx="4.5" ry="2.5" fill="#235d26" stroke="#0c220d" stroke-width="1.3" />
<ellipse cx="1205.7" cy="446.6" rx="4.5" ry="2.5" fill="#235d26" stroke="#0c220d" stroke-width="1.3" />
<ellipse cx="1227.2" cy="452.5" rx="4.5" ry="2.5" fill="#235d26" stroke="#0c220d" stroke-width="1.3" />
<ellipse cx="1248.7" cy="458.4" rx="4.5" ry="2.5" fill="#235d26" stroke="#0c220d" stroke-width="1.3" />
<ellipse cx="1270.2" cy="464.3" rx="4.5" ry="2.5" fill="#235d26" stroke="#0c220d" stroke-width="1.3" />
<ellipse cx="1291.7" cy="470.2" rx="4.5" ry="2.5" fill="#235d26" stroke="#0c220d" stroke-width="1.3" />
<ellipse cx="1313.2" cy="476.1" rx="4.5" ry="2.5" fill="#235d26" stroke="#0c220d" stroke-width="1.3" />
<ellipse cx="1334.7" cy="482.0" rx="4.5" ry="2.5" fill="#235d26" stroke="#0c220d" stroke-width="1.3" />
<polygon points="999.7,685.2 1048.4,642.3 1133.4,667.6 1133.4,740.0 1084.0,770.0 1000.0,770.0 999.7,741.0" fill="#c6c6c6" stroke="#222" stroke-width="1.1" stroke-linejoin="round" />
<path d="M999.7,685.2 L1084,708.5 L1133.4,667.6 M1084,708.5 V745 M1048.4,642.3 V727.3 L1025,748 M1048.4,727.3 L1069,733.8" fill="none" stroke="#222" stroke-width="1"/>
<path d="M1066,652 v18" stroke="#7ab8e8" stroke-width="2"/><path d="M1074,648 l6,-4" stroke="#c8e6a0" stroke-width="2"/><path d="M1084,683 l6,3" stroke="#f0a0a0" stroke-width="2"/>
<ellipse cx="1066.0" cy="676.0" rx="17" ry="8" fill="none" stroke="#2f5f8f" stroke-width="1.3" />
<ellipse cx="1066.0" cy="676.0" rx="13" ry="6" fill="none" stroke="#5a8fc0" stroke-width="1" />
<path d="M1066,670 a6,6 0 1 1 0,12 z" fill="#ffffff" stroke="none" stroke-width="1" stroke-linejoin="round" />
<ellipse cx="1066.0" cy="676.0" rx="5" ry="5" fill="#111" stroke="none" stroke-width="1" />
<ellipse cx="1066.0" cy="676.0" rx="2" ry="2" fill="#fff" stroke="none" stroke-width="1" />
<polygon points="768.7,702.7 795.0,679.9 1046.0,758.0 1023.0,778.6" fill="#44a046" stroke="#102810" stroke-width="1.6" stroke-linejoin="round" />
<ellipse cx="801.0" cy="698.6" rx="4.5" ry="2.5" fill="#235d26" stroke="#0c220d" stroke-width="1.3" />
<ellipse cx="822.2" cy="704.7" rx="4.5" ry="2.5" fill="#235d26" stroke="#0c220d" stroke-width="1.3" />
<ellipse cx="843.4" cy="710.8" rx="4.5" ry="2.5" fill="#235d26" stroke="#0c220d" stroke-width="1.3" />
<ellipse cx="864.6" cy="717.0" rx="4.5" ry="2.5" fill="#235d26" stroke="#0c220d" stroke-width="1.3" />
<ellipse cx="885.8" cy="723.1" rx="4.5" ry="2.5" fill="#235d26" stroke="#0c220d" stroke-width="1.3" />
<ellipse cx="907.0" cy="729.2" rx="4.5" ry="2.5" fill="#235d26" stroke="#0c220d" stroke-width="1.3" />
<ellipse cx="928.2" cy="735.3" rx="4.5" ry="2.5" fill="#235d26" stroke="#0c220d" stroke-width="1.3" />
<ellipse cx="949.4" cy="741.4" rx="4.5" ry="2.5" fill="#235d26" stroke="#0c220d" stroke-width="1.3" />
<ellipse cx="970.6" cy="747.6" rx="4.5" ry="2.5" fill="#235d26" stroke="#0c220d" stroke-width="1.3" />
<ellipse cx="991.8" cy="753.7" rx="4.5" ry="2.5" fill="#235d26" stroke="#0c220d" stroke-width="1.3" />
<ellipse cx="1013.0" cy="759.8" rx="4.5" ry="2.5" fill="#235d26" stroke="#0c220d" stroke-width="1.3" />
<polygon points="768.7,702.7 1023.0,778.6 1023.0,860.5 767.5,787.0" fill="url(#gf)" stroke="#102810" stroke-width="1.6" stroke-linejoin="round" />
<ellipse cx="788.0" cy="730.4" rx="4.3" ry="4.6" fill="#235a26" stroke="#0c200d" stroke-width="1.4" />
<path d="M784.8,729.9 Q785.5,733.9 789.5,733.6" fill="none" stroke="#9fd0a0" stroke-width="1"/>
<ellipse cx="788.0" cy="751.4" rx="4.3" ry="4.6" fill="#235a26" stroke="#0c200d" stroke-width="1.4" />
<path d="M784.8,750.9 Q785.5,754.9 789.5,754.6" fill="none" stroke="#9fd0a0" stroke-width="1"/>
<ellipse cx="788.0" cy="772.4" rx="4.3" ry="4.6" fill="#235a26" stroke="#0c200d" stroke-width="1.4" />
<path d="M784.8,771.9 Q785.5,775.9 789.5,775.6" fill="none" stroke="#9fd0a0" stroke-width="1"/>
<ellipse cx="809.3" cy="736.5" rx="4.3" ry="4.6" fill="#235a26" stroke="#0c200d" stroke-width="1.4" />
<path d="M806.1,736.0 Q806.8,740.0 810.8,739.7" fill="none" stroke="#9fd0a0" stroke-width="1"/>
<ellipse cx="809.3" cy="757.5" rx="4.3" ry="4.6" fill="#235a26" stroke="#0c200d" stroke-width="1.4" />
<path d="M806.1,757.0 Q806.8,761.0 810.8,760.7" fill="none" stroke="#9fd0a0" stroke-width="1"/>
<ellipse cx="809.3" cy="778.5" rx="4.3" ry="4.6" fill="#235a26" stroke="#0c200d" stroke-width="1.4" />
<path d="M806.1,778.0 Q806.8,782.0 810.8,781.7" fill="none" stroke="#9fd0a0" stroke-width="1"/>
<ellipse cx="830.5" cy="742.7" rx="4.3" ry="4.6" fill="#235a26" stroke="#0c200d" stroke-width="1.4" />
<path d="M827.3,742.2 Q828.0,746.2 832.0,745.9" fill="none" stroke="#9fd0a0" stroke-width="1"/>
<ellipse cx="830.5" cy="763.7" rx="4.3" ry="4.6" fill="#235a26" stroke="#0c200d" stroke-width="1.4" />
<path d="M827.3,763.2 Q828.0,767.2 832.0,766.9" fill="none" stroke="#9fd0a0" stroke-width="1"/>
<ellipse cx="830.5" cy="784.7" rx="4.3" ry="4.6" fill="#235a26" stroke="#0c200d" stroke-width="1.4" />
<path d="M827.3,784.2 Q828.0,788.2 832.0,787.9" fill="none" stroke="#9fd0a0" stroke-width="1"/>
<ellipse cx="851.8" cy="748.8" rx="4.3" ry="4.6" fill="#235a26" stroke="#0c200d" stroke-width="1.4" />
<path d="M848.6,748.3 Q849.3,752.3 853.3,752.0" fill="none" stroke="#9fd0a0" stroke-width="1"/>
<ellipse cx="851.8" cy="769.8" rx="4.3" ry="4.6" fill="#235a26" stroke="#0c200d" stroke-width="1.4" />
<path d="M848.6,769.3 Q849.3,773.3 853.3,773.0" fill="none" stroke="#9fd0a0" stroke-width="1"/>
<ellipse cx="851.8" cy="790.8" rx="4.3" ry="4.6" fill="#235a26" stroke="#0c200d" stroke-width="1.4" />
<path d="M848.6,790.3 Q849.3,794.3 853.3,794.0" fill="none" stroke="#9fd0a0" stroke-width="1"/>
<ellipse cx="873.1" cy="755.0" rx="4.3" ry="4.6" fill="#235a26" stroke="#0c200d" stroke-width="1.4" />
<path d="M869.9,754.5 Q870.6,758.5 874.6,758.2" fill="none" stroke="#9fd0a0" stroke-width="1"/>
<ellipse cx="873.1" cy="776.0" rx="4.3" ry="4.6" fill="#235a26" stroke="#0c200d" stroke-width="1.4" />
<path d="M869.9,775.5 Q870.6,779.5 874.6,779.2" fill="none" stroke="#9fd0a0" stroke-width="1"/>
<ellipse cx="873.1" cy="797.0" rx="4.3" ry="4.6" fill="#235a26" stroke="#0c200d" stroke-width="1.4" />
<path d="M869.9,796.5 Q870.6,800.5 874.6,800.2" fill="none" stroke="#9fd0a0" stroke-width="1"/>
<ellipse cx="894.4" cy="761.1" rx="4.3" ry="4.6" fill="#235a26" stroke="#0c200d" stroke-width="1.4" />
<path d="M891.1,760.6 Q891.9,764.6 895.9,764.3" fill="none" stroke="#9fd0a0" stroke-width="1"/>
<ellipse cx="894.4" cy="782.1" rx="4.3" ry="4.6" fill="#235a26" stroke="#0c200d" stroke-width="1.4" />
<path d="M891.1,781.6 Q891.9,785.6 895.9,785.3" fill="none" stroke="#9fd0a0" stroke-width="1"/>
<ellipse cx="894.4" cy="803.1" rx="4.3" ry="4.6" fill="#235a26" stroke="#0c200d" stroke-width="1.4" />
<path d="M891.1,802.6 Q891.9,806.6 895.9,806.3" fill="none" stroke="#9fd0a0" stroke-width="1"/>
<ellipse cx="915.6" cy="767.2" rx="4.3" ry="4.6" fill="#235a26" stroke="#0c200d" stroke-width="1.4" />
<path d="M912.4,766.7 Q913.1,770.7 917.1,770.4" fill="none" stroke="#9fd0a0" stroke-width="1"/>
<ellipse cx="915.6" cy="788.2" rx="4.3" ry="4.6" fill="#235a26" stroke="#0c200d" stroke-width="1.4" />
<path d="M912.4,787.7 Q913.1,791.7 917.1,791.4" fill="none" stroke="#9fd0a0" stroke-width="1"/>
<ellipse cx="915.6" cy="809.2" rx="4.3" ry="4.6" fill="#235a26" stroke="#0c200d" stroke-width="1.4" />
<path d="M912.4,808.7 Q913.1,812.7 917.1,812.4" fill="none" stroke="#9fd0a0" stroke-width="1"/>
<ellipse cx="936.9" cy="773.4" rx="4.3" ry="4.6" fill="#235a26" stroke="#0c200d" stroke-width="1.4" />
<path d="M933.7,772.9 Q934.4,776.9 938.4,776.6" fill="none" stroke="#9fd0a0" stroke-width="1"/>
<ellipse cx="936.9" cy="794.4" rx="4.3" ry="4.6" fill="#235a26" stroke="#0c200d" stroke-width="1.4" />
<path d="M933.7,793.9 Q934.4,797.9 938.4,797.6" fill="none" stroke="#9fd0a0" stroke-width="1"/>
<ellipse cx="936.9" cy="815.4" rx="4.3" ry="4.6" fill="#235a26" stroke="#0c200d" stroke-width="1.4" />
<path d="M933.7,814.9 Q934.4,818.9 938.4,818.6" fill="none" stroke="#9fd0a0" stroke-width="1"/>
<ellipse cx="958.2" cy="779.5" rx="4.3" ry="4.6" fill="#235a26" stroke="#0c200d" stroke-width="1.4" />
<path d="M955.0,779.0 Q955.7,783.0 959.7,782.7" fill="none" stroke="#9fd0a0" stroke-width="1"/>
<ellipse cx="958.2" cy="800.5" rx="4.3" ry="4.6" fill="#235a26" stroke="#0c200d" stroke-width="1.4" />
<path d="M955.0,800.0 Q955.7,804.0 959.7,803.7" fill="none" stroke="#9fd0a0" stroke-width="1"/>
<ellipse cx="958.2" cy="821.5" rx="4.3" ry="4.6" fill="#235a26" stroke="#0c200d" stroke-width="1.4" />
<path d="M955.0,821.0 Q955.7,825.0 959.7,824.7" fill="none" stroke="#9fd0a0" stroke-width="1"/>
<ellipse cx="979.4" cy="785.7" rx="4.3" ry="4.6" fill="#235a26" stroke="#0c200d" stroke-width="1.4" />
<path d="M976.2,785.2 Q976.9,789.2 980.9,788.9" fill="none" stroke="#9fd0a0" stroke-width="1"/>
<ellipse cx="979.4" cy="806.7" rx="4.3" ry="4.6" fill="#235a26" stroke="#0c200d" stroke-width="1.4" />
<path d="M976.2,806.2 Q976.9,810.2 980.9,809.9" fill="none" stroke="#9fd0a0" stroke-width="1"/>
<ellipse cx="979.4" cy="827.7" rx="4.3" ry="4.6" fill="#235a26" stroke="#0c200d" stroke-width="1.4" />
<path d="M976.2,827.2 Q976.9,831.2 980.9,830.9" fill="none" stroke="#9fd0a0" stroke-width="1"/>
<ellipse cx="1000.7" cy="791.8" rx="4.3" ry="4.6" fill="#235a26" stroke="#0c200d" stroke-width="1.4" />
<path d="M997.5,791.3 Q998.2,795.3 1002.2,795.0" fill="none" stroke="#9fd0a0" stroke-width="1"/>
<ellipse cx="1000.7" cy="812.8" rx="4.3" ry="4.6" fill="#235a26" stroke="#0c200d" stroke-width="1.4" />
<path d="M997.5,812.3 Q998.2,816.3 1002.2,816.0" fill="none" stroke="#9fd0a0" stroke-width="1"/>
<ellipse cx="1000.7" cy="833.8" rx="4.3" ry="4.6" fill="#235a26" stroke="#0c200d" stroke-width="1.4" />
<path d="M997.5,833.3 Q998.2,837.3 1002.2,837.0" fill="none" stroke="#9fd0a0" stroke-width="1"/>
<polygon points="725.0,690.6 768.7,702.7 767.5,787.0 725.3,775.0" fill="#2e7f32" stroke="#102810" stroke-width="1.6" stroke-linejoin="round" />
<polygon points="728.0,695.0 765.0,705.5 764.0,783.0 728.5,772.0" fill="#1e1e1e" stroke="#0f0f0f" stroke-width="0.8" stroke-linejoin="round" />
<polygon points="1365.0,479.5 1408.0,492.0 1064.0,790.6 1023.0,778.6" fill="#44a046" stroke="#102810" stroke-width="1.6" stroke-linejoin="round" />
<ellipse cx="1374.0" cy="496.0" rx="4.5" ry="2.5" fill="#235d26" stroke="#0c220d" stroke-width="1.3" />
<ellipse cx="1361.7" cy="506.6" rx="4.5" ry="2.5" fill="#235d26" stroke="#0c220d" stroke-width="1.3" />
<ellipse cx="1349.4" cy="517.2" rx="4.5" ry="2.5" fill="#235d26" stroke="#0c220d" stroke-width="1.3" />
<ellipse cx="1337.1" cy="527.8" rx="4.5" ry="2.5" fill="#235d26" stroke="#0c220d" stroke-width="1.3" />
<ellipse cx="1324.8" cy="538.4" rx="4.5" ry="2.5" fill="#235d26" stroke="#0c220d" stroke-width="1.3" />
<ellipse cx="1312.5" cy="549.0" rx="4.5" ry="2.5" fill="#235d26" stroke="#0c220d" stroke-width="1.3" />
<ellipse cx="1300.2" cy="559.6" rx="4.5" ry="2.5" fill="#235d26" stroke="#0c220d" stroke-width="1.3" />
<ellipse cx="1287.9" cy="570.2" rx="4.5" ry="2.5" fill="#235d26" stroke="#0c220d" stroke-width="1.3" />
<ellipse cx="1275.6" cy="580.8" rx="4.5" ry="2.5" fill="#235d26" stroke="#0c220d" stroke-width="1.3" />
<ellipse cx="1263.3" cy="591.4" rx="4.5" ry="2.5" fill="#235d26" stroke="#0c220d" stroke-width="1.3" />
<ellipse cx="1251.0" cy="602.0" rx="4.5" ry="2.5" fill="#235d26" stroke="#0c220d" stroke-width="1.3" />
<ellipse cx="1238.7" cy="612.6" rx="4.5" ry="2.5" fill="#235d26" stroke="#0c220d" stroke-width="1.3" />
<ellipse cx="1226.4" cy="623.2" rx="4.5" ry="2.5" fill="#235d26" stroke="#0c220d" stroke-width="1.3" />
<ellipse cx="1214.1" cy="633.8" rx="4.5" ry="2.5" fill="#235d26" stroke="#0c220d" stroke-width="1.3" />
<ellipse cx="1201.8" cy="644.4" rx="4.5" ry="2.5" fill="#235d26" stroke="#0c220d" stroke-width="1.3" />
<ellipse cx="1189.5" cy="655.0" rx="4.5" ry="2.5" fill="#235d26" stroke="#0c220d" stroke-width="1.3" />
<ellipse cx="1177.2" cy="665.6" rx="4.5" ry="2.5" fill="#235d26" stroke="#0c220d" stroke-width="1.3" />
<ellipse cx="1164.9" cy="676.2" rx="4.5" ry="2.5" fill="#235d26" stroke="#0c220d" stroke-width="1.3" />
<ellipse cx="1152.6" cy="686.8" rx="4.5" ry="2.5" fill="#235d26" stroke="#0c220d" stroke-width="1.3" />
<ellipse cx="1140.3" cy="697.4" rx="4.5" ry="2.5" fill="#235d26" stroke="#0c220d" stroke-width="1.3" />
<ellipse cx="1128.0" cy="708.0" rx="4.5" ry="2.5" fill="#235d26" stroke="#0c220d" stroke-width="1.3" />
<ellipse cx="1115.7" cy="718.6" rx="4.5" ry="2.5" fill="#235d26" stroke="#0c220d" stroke-width="1.3" />
<ellipse cx="1103.4" cy="729.2" rx="4.5" ry="2.5" fill="#235d26" stroke="#0c220d" stroke-width="1.3" />
<ellipse cx="1091.1" cy="739.8" rx="4.5" ry="2.5" fill="#235d26" stroke="#0c220d" stroke-width="1.3" />
<ellipse cx="1078.8" cy="750.4" rx="4.5" ry="2.5" fill="#235d26" stroke="#0c220d" stroke-width="1.3" />
<ellipse cx="1066.5" cy="761.0" rx="4.5" ry="2.5" fill="#235d26" stroke="#0c220d" stroke-width="1.3" />
<ellipse cx="1054.2" cy="771.6" rx="4.5" ry="2.5" fill="#235d26" stroke="#0c220d" stroke-width="1.3" />
<polygon points="1408.0,492.0 1408.0,577.0 1064.0,872.5 1064.0,790.6" fill="#3a8e3c" stroke="#102810" stroke-width="1.6" stroke-linejoin="round" />
<ellipse cx="1395.5" cy="523.6" rx="2.4" ry="5.6" fill="#2a6a2d" stroke="#0c220d" stroke-width="1.2" transform="rotate(22 1395.5 523.6)" />
<ellipse cx="1395.5" cy="544.6" rx="2.4" ry="5.6" fill="#2a6a2d" stroke="#0c220d" stroke-width="1.2" transform="rotate(22 1395.5 544.6)" />
<ellipse cx="1395.5" cy="565.6" rx="2.4" ry="5.6" fill="#2a6a2d" stroke="#0c220d" stroke-width="1.2" transform="rotate(22 1395.5 565.6)" />
<ellipse cx="1383.2" cy="534.2" rx="2.4" ry="5.6" fill="#2a6a2d" stroke="#0c220d" stroke-width="1.2" transform="rotate(22 1383.2 534.2)" />
<ellipse cx="1383.2" cy="555.2" rx="2.4" ry="5.6" fill="#2a6a2d" stroke="#0c220d" stroke-width="1.2" transform="rotate(22 1383.2 555.2)" />
<ellipse cx="1383.2" cy="576.2" rx="2.4" ry="5.6" fill="#2a6a2d" stroke="#0c220d" stroke-width="1.2" transform="rotate(22 1383.2 576.2)" />
<ellipse cx="1370.9" cy="544.8" rx="2.4" ry="5.6" fill="#2a6a2d" stroke="#0c220d" stroke-width="1.2" transform="rotate(22 1370.9 544.8)" />
<ellipse cx="1370.9" cy="565.8" rx="2.4" ry="5.6" fill="#2a6a2d" stroke="#0c220d" stroke-width="1.2" transform="rotate(22 1370.9 565.8)" />
<ellipse cx="1370.9" cy="586.8" rx="2.4" ry="5.6" fill="#2a6a2d" stroke="#0c220d" stroke-width="1.2" transform="rotate(22 1370.9 586.8)" />
<ellipse cx="1358.6" cy="555.4" rx="2.4" ry="5.6" fill="#2a6a2d" stroke="#0c220d" stroke-width="1.2" transform="rotate(22 1358.6 555.4)" />
<ellipse cx="1358.6" cy="576.4" rx="2.4" ry="5.6" fill="#2a6a2d" stroke="#0c220d" stroke-width="1.2" transform="rotate(22 1358.6 576.4)" />
<ellipse cx="1358.6" cy="597.4" rx="2.4" ry="5.6" fill="#2a6a2d" stroke="#0c220d" stroke-width="1.2" transform="rotate(22 1358.6 597.4)" />
<ellipse cx="1346.3" cy="566.0" rx="2.4" ry="5.6" fill="#2a6a2d" stroke="#0c220d" stroke-width="1.2" transform="rotate(22 1346.3 566.0)" />
<ellipse cx="1346.3" cy="587.0" rx="2.4" ry="5.6" fill="#2a6a2d" stroke="#0c220d" stroke-width="1.2" transform="rotate(22 1346.3 587.0)" />
<ellipse cx="1346.3" cy="608.0" rx="2.4" ry="5.6" fill="#2a6a2d" stroke="#0c220d" stroke-width="1.2" transform="rotate(22 1346.3 608.0)" />
<ellipse cx="1334.0" cy="576.6" rx="2.4" ry="5.6" fill="#2a6a2d" stroke="#0c220d" stroke-width="1.2" transform="rotate(22 1334.0 576.6)" />
<ellipse cx="1334.0" cy="597.6" rx="2.4" ry="5.6" fill="#2a6a2d" stroke="#0c220d" stroke-width="1.2" transform="rotate(22 1334.0 597.6)" />
<ellipse cx="1334.0" cy="618.6" rx="2.4" ry="5.6" fill="#2a6a2d" stroke="#0c220d" stroke-width="1.2" transform="rotate(22 1334.0 618.6)" />
<ellipse cx="1321.7" cy="587.2" rx="2.4" ry="5.6" fill="#2a6a2d" stroke="#0c220d" stroke-width="1.2" transform="rotate(22 1321.7 587.2)" />
<ellipse cx="1321.7" cy="608.2" rx="2.4" ry="5.6" fill="#2a6a2d" stroke="#0c220d" stroke-width="1.2" transform="rotate(22 1321.7 608.2)" />
<ellipse cx="1321.7" cy="629.2" rx="2.4" ry="5.6" fill="#2a6a2d" stroke="#0c220d" stroke-width="1.2" transform="rotate(22 1321.7 629.2)" />
<ellipse cx="1309.4" cy="597.8" rx="2.4" ry="5.6" fill="#2a6a2d" stroke="#0c220d" stroke-width="1.2" transform="rotate(22 1309.4 597.8)" />
<ellipse cx="1309.4" cy="618.8" rx="2.4" ry="5.6" fill="#2a6a2d" stroke="#0c220d" stroke-width="1.2" transform="rotate(22 1309.4 618.8)" />
<ellipse cx="1309.4" cy="639.8" rx="2.4" ry="5.6" fill="#2a6a2d" stroke="#0c220d" stroke-width="1.2" transform="rotate(22 1309.4 639.8)" />
<ellipse cx="1297.1" cy="608.4" rx="2.4" ry="5.6" fill="#2a6a2d" stroke="#0c220d" stroke-width="1.2" transform="rotate(22 1297.1 608.4)" />
<ellipse cx="1297.1" cy="629.4" rx="2.4" ry="5.6" fill="#2a6a2d" stroke="#0c220d" stroke-width="1.2" transform="rotate(22 1297.1 629.4)" />
<ellipse cx="1297.1" cy="650.4" rx="2.4" ry="5.6" fill="#2a6a2d" stroke="#0c220d" stroke-width="1.2" transform="rotate(22 1297.1 650.4)" />
<ellipse cx="1284.8" cy="619.0" rx="2.4" ry="5.6" fill="#2a6a2d" stroke="#0c220d" stroke-width="1.2" transform="rotate(22 1284.8 619.0)" />
<ellipse cx="1284.8" cy="640.0" rx="2.4" ry="5.6" fill="#2a6a2d" stroke="#0c220d" stroke-width="1.2" transform="rotate(22 1284.8 640.0)" />
<ellipse cx="1284.8" cy="661.0" rx="2.4" ry="5.6" fill="#2a6a2d" stroke="#0c220d" stroke-width="1.2" transform="rotate(22 1284.8 661.0)" />
<ellipse cx="1272.5" cy="629.6" rx="2.4" ry="5.6" fill="#2a6a2d" stroke="#0c220d" stroke-width="1.2" transform="rotate(22 1272.5 629.6)" />
<ellipse cx="1272.5" cy="650.6" rx="2.4" ry="5.6" fill="#2a6a2d" stroke="#0c220d" stroke-width="1.2" transform="rotate(22 1272.5 650.6)" />
<ellipse cx="1272.5" cy="671.6" rx="2.4" ry="5.6" fill="#2a6a2d" stroke="#0c220d" stroke-width="1.2" transform="rotate(22 1272.5 671.6)" />
<ellipse cx="1260.2" cy="640.2" rx="2.4" ry="5.6" fill="#2a6a2d" stroke="#0c220d" stroke-width="1.2" transform="rotate(22 1260.2 640.2)" />
<ellipse cx="1260.2" cy="661.2" rx="2.4" ry="5.6" fill="#2a6a2d" stroke="#0c220d" stroke-width="1.2" transform="rotate(22 1260.2 661.2)" />
<ellipse cx="1260.2" cy="682.2" rx="2.4" ry="5.6" fill="#2a6a2d" stroke="#0c220d" stroke-width="1.2" transform="rotate(22 1260.2 682.2)" />
<ellipse cx="1247.9" cy="650.8" rx="2.4" ry="5.6" fill="#2a6a2d" stroke="#0c220d" stroke-width="1.2" transform="rotate(22 1247.9 650.8)" />
<ellipse cx="1247.9" cy="671.8" rx="2.4" ry="5.6" fill="#2a6a2d" stroke="#0c220d" stroke-width="1.2" transform="rotate(22 1247.9 671.8)" />
<ellipse cx="1247.9" cy="692.8" rx="2.4" ry="5.6" fill="#2a6a2d" stroke="#0c220d" stroke-width="1.2" transform="rotate(22 1247.9 692.8)" />
<ellipse cx="1235.6" cy="661.4" rx="2.4" ry="5.6" fill="#2a6a2d" stroke="#0c220d" stroke-width="1.2" transform="rotate(22 1235.6 661.4)" />
<ellipse cx="1235.6" cy="682.4" rx="2.4" ry="5.6" fill="#2a6a2d" stroke="#0c220d" stroke-width="1.2" transform="rotate(22 1235.6 682.4)" />
<ellipse cx="1235.6" cy="703.4" rx="2.4" ry="5.6" fill="#2a6a2d" stroke="#0c220d" stroke-width="1.2" transform="rotate(22 1235.6 703.4)" />
<ellipse cx="1223.3" cy="672.0" rx="2.4" ry="5.6" fill="#2a6a2d" stroke="#0c220d" stroke-width="1.2" transform="rotate(22 1223.3 672.0)" />
<ellipse cx="1223.3" cy="693.0" rx="2.4" ry="5.6" fill="#2a6a2d" stroke="#0c220d" stroke-width="1.2" transform="rotate(22 1223.3 693.0)" />
<ellipse cx="1223.3" cy="714.0" rx="2.4" ry="5.6" fill="#2a6a2d" stroke="#0c220d" stroke-width="1.2" transform="rotate(22 1223.3 714.0)" />
<ellipse cx="1211.0" cy="682.6" rx="2.4" ry="5.6" fill="#2a6a2d" stroke="#0c220d" stroke-width="1.2" transform="rotate(22 1211.0 682.6)" />
<ellipse cx="1211.0" cy="703.6" rx="2.4" ry="5.6" fill="#2a6a2d" stroke="#0c220d" stroke-width="1.2" transform="rotate(22 1211.0 703.6)" />
<ellipse cx="1211.0" cy="724.6" rx="2.4" ry="5.6" fill="#2a6a2d" stroke="#0c220d" stroke-width="1.2" transform="rotate(22 1211.0 724.6)" />
<ellipse cx="1198.7" cy="693.2" rx="2.4" ry="5.6" fill="#2a6a2d" stroke="#0c220d" stroke-width="1.2" transform="rotate(22 1198.7 693.2)" />
<ellipse cx="1198.7" cy="714.2" rx="2.4" ry="5.6" fill="#2a6a2d" stroke="#0c220d" stroke-width="1.2" transform="rotate(22 1198.7 714.2)" />
<ellipse cx="1198.7" cy="735.2" rx="2.4" ry="5.6" fill="#2a6a2d" stroke="#0c220d" stroke-width="1.2" transform="rotate(22 1198.7 735.2)" />
<ellipse cx="1186.4" cy="703.8" rx="2.4" ry="5.6" fill="#2a6a2d" stroke="#0c220d" stroke-width="1.2" transform="rotate(22 1186.4 703.8)" />
<ellipse cx="1186.4" cy="724.8" rx="2.4" ry="5.6" fill="#2a6a2d" stroke="#0c220d" stroke-width="1.2" transform="rotate(22 1186.4 724.8)" />
<ellipse cx="1186.4" cy="745.8" rx="2.4" ry="5.6" fill="#2a6a2d" stroke="#0c220d" stroke-width="1.2" transform="rotate(22 1186.4 745.8)" />
<ellipse cx="1174.1" cy="714.4" rx="2.4" ry="5.6" fill="#2a6a2d" stroke="#0c220d" stroke-width="1.2" transform="rotate(22 1174.1 714.4)" />
<ellipse cx="1174.1" cy="735.4" rx="2.4" ry="5.6" fill="#2a6a2d" stroke="#0c220d" stroke-width="1.2" transform="rotate(22 1174.1 735.4)" />
<ellipse cx="1174.1" cy="756.4" rx="2.4" ry="5.6" fill="#2a6a2d" stroke="#0c220d" stroke-width="1.2" transform="rotate(22 1174.1 756.4)" />
<ellipse cx="1161.8" cy="725.0" rx="2.4" ry="5.6" fill="#2a6a2d" stroke="#0c220d" stroke-width="1.2" transform="rotate(22 1161.8 725.0)" />
<ellipse cx="1161.8" cy="746.0" rx="2.4" ry="5.6" fill="#2a6a2d" stroke="#0c220d" stroke-width="1.2" transform="rotate(22 1161.8 746.0)" />
<ellipse cx="1161.8" cy="767.0" rx="2.4" ry="5.6" fill="#2a6a2d" stroke="#0c220d" stroke-width="1.2" transform="rotate(22 1161.8 767.0)" />
<ellipse cx="1149.5" cy="735.6" rx="2.4" ry="5.6" fill="#2a6a2d" stroke="#0c220d" stroke-width="1.2" transform="rotate(22 1149.5 735.6)" />
<ellipse cx="1149.5" cy="756.6" rx="2.4" ry="5.6" fill="#2a6a2d" stroke="#0c220d" stroke-width="1.2" transform="rotate(22 1149.5 756.6)" />
<ellipse cx="1149.5" cy="777.6" rx="2.4" ry="5.6" fill="#2a6a2d" stroke="#0c220d" stroke-width="1.2" transform="rotate(22 1149.5 777.6)" />
<ellipse cx="1137.2" cy="746.2" rx="2.4" ry="5.6" fill="#2a6a2d" stroke="#0c220d" stroke-width="1.2" transform="rotate(22 1137.2 746.2)" />
<ellipse cx="1137.2" cy="767.2" rx="2.4" ry="5.6" fill="#2a6a2d" stroke="#0c220d" stroke-width="1.2" transform="rotate(22 1137.2 767.2)" />
<ellipse cx="1137.2" cy="788.2" rx="2.4" ry="5.6" fill="#2a6a2d" stroke="#0c220d" stroke-width="1.2" transform="rotate(22 1137.2 788.2)" />
<ellipse cx="1124.9" cy="756.8" rx="2.4" ry="5.6" fill="#2a6a2d" stroke="#0c220d" stroke-width="1.2" transform="rotate(22 1124.9 756.8)" />
<ellipse cx="1124.9" cy="777.8" rx="2.4" ry="5.6" fill="#2a6a2d" stroke="#0c220d" stroke-width="1.2" transform="rotate(22 1124.9 777.8)" />
<ellipse cx="1124.9" cy="798.8" rx="2.4" ry="5.6" fill="#2a6a2d" stroke="#0c220d" stroke-width="1.2" transform="rotate(22 1124.9 798.8)" />
<ellipse cx="1112.6" cy="767.4" rx="2.4" ry="5.6" fill="#2a6a2d" stroke="#0c220d" stroke-width="1.2" transform="rotate(22 1112.6 767.4)" />
<ellipse cx="1112.6" cy="788.4" rx="2.4" ry="5.6" fill="#2a6a2d" stroke="#0c220d" stroke-width="1.2" transform="rotate(22 1112.6 788.4)" />
<ellipse cx="1112.6" cy="809.4" rx="2.4" ry="5.6" fill="#2a6a2d" stroke="#0c220d" stroke-width="1.2" transform="rotate(22 1112.6 809.4)" />
<ellipse cx="1100.3" cy="778.0" rx="2.4" ry="5.6" fill="#2a6a2d" stroke="#0c220d" stroke-width="1.2" transform="rotate(22 1100.3 778.0)" />
<ellipse cx="1100.3" cy="799.0" rx="2.4" ry="5.6" fill="#2a6a2d" stroke="#0c220d" stroke-width="1.2" transform="rotate(22 1100.3 799.0)" />
<ellipse cx="1100.3" cy="820.0" rx="2.4" ry="5.6" fill="#2a6a2d" stroke="#0c220d" stroke-width="1.2" transform="rotate(22 1100.3 820.0)" />
<ellipse cx="1088.0" cy="788.6" rx="2.4" ry="5.6" fill="#2a6a2d" stroke="#0c220d" stroke-width="1.2" transform="rotate(22 1088.0 788.6)" />
<ellipse cx="1088.0" cy="809.6" rx="2.4" ry="5.6" fill="#2a6a2d" stroke="#0c220d" stroke-width="1.2" transform="rotate(22 1088.0 809.6)" />
<ellipse cx="1088.0" cy="830.6" rx="2.4" ry="5.6" fill="#2a6a2d" stroke="#0c220d" stroke-width="1.2" transform="rotate(22 1088.0 830.6)" />
<ellipse cx="1075.7" cy="799.2" rx="2.4" ry="5.6" fill="#2a6a2d" stroke="#0c220d" stroke-width="1.2" transform="rotate(22 1075.7 799.2)" />
<ellipse cx="1075.7" cy="820.2" rx="2.4" ry="5.6" fill="#2a6a2d" stroke="#0c220d" stroke-width="1.2" transform="rotate(22 1075.7 820.2)" />
<ellipse cx="1075.7" cy="841.2" rx="2.4" ry="5.6" fill="#2a6a2d" stroke="#0c220d" stroke-width="1.2" transform="rotate(22 1075.7 841.2)" />
<polygon points="1023.0,778.6 1064.0,790.6 1064.0,872.5 1023.0,860.5" fill="#2e7f32" stroke="#102810" stroke-width="1.6" stroke-linejoin="round" />
<polygon points="1026.0,783.0 1061.0,793.5 1061.0,868.5 1026.0,857.0" fill="#1e1e1e" stroke="#0f0f0f" stroke-width="0.8" stroke-linejoin="round" />
<path d="M749,604 Q758,598 767,604 L767,672 L749,672 Z" fill="#1c1c1c" stroke="none" stroke-width="1" stroke-linejoin="round" />
<path d="M593,568 L593,580 Q595,590 610,594 L792,662 Q798,664 803,660 L880,592 L880,584 L800,652 Q795,656 788,654 L608,586 Q594,580 593,568 Z" fill="url(#gside)" stroke="#262626" stroke-width="1" stroke-linejoin="round" />
<path d="M612,551 Q630,542 659,541 L872,578 Q882,580 879,586 L802,652 Q796,657 788,654 L606,584 Q590,578 593,565 Q597,556 612,551 Z" fill="#ececec" stroke="#262626" stroke-width="1.1" stroke-linejoin="round" />
<ellipse cx="628.5" cy="567.0" rx="26" ry="12" fill="#ffffff" stroke="#262626" stroke-width="1" />
<path d="M602.5,567 A26,12 0 0 1 654.5,567 A26,7 0 0 0 602.5,567 Z" fill="#8e8e8e" stroke="none" stroke-width="1" stroke-linejoin="round" />
<path d="M602.5,567 A26,12 0 0 1 654.5,567" fill="none" stroke="#262626" stroke-width="1" stroke-linejoin="round" />
<ellipse cx="701.0" cy="560.0" rx="30" ry="15" fill="#c9c9c9" stroke="#262626" stroke-width="1" />
<ellipse cx="701.0" cy="558.0" rx="24" ry="11.5" fill="#888" stroke="#262626" stroke-width="1" />
<ellipse cx="701.0" cy="557.0" rx="18" ry="8.5" fill="#b5b5b5" stroke="#262626" stroke-width="0.9" />
<ellipse cx="701.0" cy="556.0" rx="13" ry="6" fill="#2a2a2a" stroke="#262626" stroke-width="0.9" />
<ellipse cx="701.0" cy="555.0" rx="4" ry="2" fill="#111" stroke="none" stroke-width="1" />
<ellipse cx="659.0" cy="546.0" rx="4.3" ry="2.5" fill="#9e9e9e" stroke="#262626" stroke-width="0.9" />
<ellipse cx="868.7" cy="580.0" rx="4.3" ry="2.5" fill="#9e9e9e" stroke="#262626" stroke-width="0.9" />
<ellipse cx="757.8" cy="580.0" rx="4.3" ry="2.5" fill="#9e9e9e" stroke="#262626" stroke-width="0.9" />
<ellipse cx="831.7" cy="611.8" rx="4.3" ry="2.5" fill="#9e9e9e" stroke="#262626" stroke-width="0.9" />
<ellipse cx="795.4" cy="644.2" rx="4.3" ry="2.5" fill="#9e9e9e" stroke="#262626" stroke-width="0.9" />
<clipPath id="c2"><polygon points="737.6,556.0 753.2,556.0 753.2,574.0 733.7,573.0"/></clipPath>
<polygon points="737.6,556.0 753.2,556.0 753.2,574.0 733.7,573.0" fill="#8e8e8e"/>
<g clip-path="url(#c2)">
<polygon points="737.6,565.0 753.2,565.0 753.2,583.0 733.7,582.0" fill="#ffffff"/>
</g>
<polygon points="737.6,556.0 753.2,556.0 753.2,574.0 733.7,573.0" fill="none" stroke="#262626" stroke-width="1.1" stroke-linejoin="round"/>
<clipPath id="c3"><polygon points="763.0,563.0 844.0,577.5 842.0,580.0 770.0,579.0 763.0,574.0"/></clipPath>
<polygon points="763.0,563.0 844.0,577.5 842.0,580.0 770.0,579.0 763.0,574.0" fill="#8e8e8e"/>
<g clip-path="url(#c3)">
<polygon points="763.0,571.0 844.0,585.5 842.0,588.0 770.0,587.0 763.0,582.0" fill="#ffffff"/>
</g>
<polygon points="763.0,563.0 844.0,577.5 842.0,580.0 770.0,579.0 763.0,574.0" fill="none" stroke="#262626" stroke-width="1.1" stroke-linejoin="round"/>
<clipPath id="c4"><polygon points="779.0,583.5 855.0,583.0 862.0,588.0 843.0,605.0 779.0,587.0"/></clipPath>
<polygon points="779.0,583.5 855.0,583.0 862.0,588.0 843.0,605.0 779.0,587.0" fill="#8e8e8e"/>
<g clip-path="url(#c4)">
<polygon points="779.0,591.5 855.0,591.0 862.0,596.0 843.0,613.0 779.0,595.0" fill="#ffffff"/>
<polygon points="825.0,570.0 870.0,570.0 870.0,615.0 835.0,615.0" fill="#3a9a3e"/>
</g>
<polygon points="779.0,583.5 855.0,583.0 862.0,588.0 843.0,605.0 779.0,587.0" fill="none" stroke="#262626" stroke-width="1.1" stroke-linejoin="round"/>
<clipPath id="c5"><polygon points="771.4,592.3 825.0,620.0 808.0,637.0 793.0,631.0"/></clipPath>
<polygon points="771.4,592.3 825.0,620.0 808.0,637.0 793.0,631.0" fill="#8e8e8e"/>
<g clip-path="url(#c5)">
<polygon points="771.4,600.3 825.0,628.0 808.0,645.0 793.0,639.0" fill="#ffffff"/>
<polygon points="790.0,610.0 830.0,610.0 830.0,640.0 800.0,640.0" fill="#3a9a3e"/>
</g>
<polygon points="771.4,592.3 825.0,620.0 808.0,637.0 793.0,631.0" fill="none" stroke="#262626" stroke-width="1.1" stroke-linejoin="round"/>
<clipPath id="c6"><polygon points="662.0,590.0 746.7,585.2 742.8,591.0 664.0,597.0"/></clipPath>
<polygon points="662.0,590.0 746.7,585.2 742.8,591.0 664.0,597.0" fill="#8e8e8e"/>
<g clip-path="url(#c6)">
<polygon points="662.0,595.0 746.7,590.2 742.8,596.0 664.0,602.0" fill="#ffffff"/>
</g>
<polygon points="662.0,590.0 746.7,585.2 742.8,591.0 664.0,597.0" fill="none" stroke="#262626" stroke-width="1.1" stroke-linejoin="round"/>
<clipPath id="c7"><polygon points="648.0,583.0 671.0,571.0 695.0,580.0 693.0,585.0"/></clipPath>
<polygon points="648.0,583.0 671.0,571.0 695.0,580.0 693.0,585.0" fill="#8e8e8e"/>
<g clip-path="url(#c7)">
<polygon points="648.0,587.0 671.0,575.0 695.0,584.0 693.0,589.0" fill="#ffffff"/>
</g>
<polygon points="648.0,583.0 671.0,571.0 695.0,580.0 693.0,585.0" fill="none" stroke="#262626" stroke-width="1.1" stroke-linejoin="round"/>
<clipPath id="c8"><polygon points="753.2,592.3 761.0,592.3 785.7,637.7 729.8,619.6"/></clipPath>
<polygon points="753.2,592.3 761.0,592.3 785.7,637.7 729.8,619.6" fill="#8e8e8e"/>
<g clip-path="url(#c8)">
<polygon points="753.2,600.3 761.0,600.3 785.7,645.7 729.8,627.6" fill="#ffffff"/>
<polygon points="748.0,600.0 767.5,600.0 767.5,640.0 748.0,640.0" fill="#1c1c1c"/>
</g>
<polygon points="753.2,592.3 761.0,592.3 785.7,637.7 729.8,619.6" fill="none" stroke="#262626" stroke-width="1.1" stroke-linejoin="round"/>
<rect x="616" y="340" width="26" height="242" fill="url(#gshaft)"/>
<path d="M629,345 V582" stroke="#0b0b0b" stroke-width="1"/>
<ellipse cx="629.0" cy="341.0" rx="13" ry="6" fill="#262626" stroke="#111" stroke-width="1" />
<ellipse cx="629.0" cy="341.0" rx="5" ry="2.5" fill="#111" stroke="#333" stroke-width="0.8" />
<polygon points="663.7,640.0 663.7,666.0 661.8,666.6 663.5,667.3 661.4,667.9 662.9,668.6 660.7,669.1 661.9,669.9 659.5,670.3 660.5,671.1 658.0,671.4 658.7,672.2 656.2,672.5 656.6,673.3 654.0,673.5 654.2,674.4 651.6,674.4 651.5,675.3 648.8,675.2 648.4,676.1 645.8,676.0 645.2,676.8 642.7,676.6 641.7,677.4 639.3,677.1 638.1,677.9 635.8,677.5 634.4,678.2 632.2,677.7 630.6,678.4 628.5,677.9 626.7,678.5 624.9,677.9 622.8,678.4 621.2,677.7 619.0,678.2 617.6,677.5 615.3,677.9 614.1,677.1 611.7,677.4 610.7,676.6 608.2,676.8 607.6,676.0 605.0,676.1 604.6,675.2 601.9,675.3 601.8,674.4 599.2,674.4 599.4,673.5 596.8,673.3 597.2,672.5 594.7,672.2 595.4,671.4 592.9,671.1 593.9,670.3 591.5,669.9 592.7,669.1 590.5,668.6 592.0,667.9 589.9,667.3 591.6,666.6 589.7,666.0 589.7,640.0" fill="#dc9e30" stroke="#f4bf55" stroke-width="2" stroke-linejoin="round"/>
<path d="M663.5,644.3 V665.3" stroke="#b97e1f" stroke-width="1.8" opacity="0.8"/>
<path d="M662.9,645.6 V666.6" stroke="#b97e1f" stroke-width="1.8" opacity="0.8"/>
<path d="M661.9,646.9 V667.9" stroke="#b97e1f" stroke-width="1.8" opacity="0.8"/>
<path d="M660.5,648.1 V669.1" stroke="#b97e1f" stroke-width="1.8" opacity="0.8"/>
<path d="M658.7,649.2 V670.2" stroke="#b97e1f" stroke-width="1.8" opacity="0.8"/>
<path d="M656.6,650.3 V671.3" stroke="#b97e1f" stroke-width="1.8" opacity="0.8"/>
<path d="M654.2,651.4 V672.4" stroke="#b97e1f" stroke-width="1.8" opacity="0.8"/>
<path d="M651.5,652.3 V673.3" stroke="#b97e1f" stroke-width="1.8" opacity="0.8"/>
<path d="M648.4,653.1 V674.1" stroke="#b97e1f" stroke-width="1.8" opacity="0.8"/>
<path d="M645.2,653.8 V674.8" stroke="#b97e1f" stroke-width="1.8" opacity="0.8"/>
<path d="M641.7,654.4 V675.4" stroke="#b97e1f" stroke-width="1.8" opacity="0.8"/>
<path d="M638.1,654.9 V675.9" stroke="#b97e1f" stroke-width="1.8" opacity="0.8"/>
<path d="M634.4,655.2 V676.2" stroke="#b97e1f" stroke-width="1.8" opacity="0.8"/>
<path d="M630.6,655.4 V676.4" stroke="#b97e1f" stroke-width="1.8" opacity="0.8"/>
<path d="M626.7,655.5 V676.5" stroke="#b97e1f" stroke-width="1.8" opacity="0.8"/>
<path d="M622.8,655.4 V676.4" stroke="#b97e1f" stroke-width="1.8" opacity="0.8"/>
<path d="M619.0,655.2 V676.2" stroke="#b97e1f" stroke-width="1.8" opacity="0.8"/>
<path d="M615.3,654.9 V675.9" stroke="#b97e1f" stroke-width="1.8" opacity="0.8"/>
<path d="M611.7,654.4 V675.4" stroke="#b97e1f" stroke-width="1.8" opacity="0.8"/>
<path d="M608.2,653.8 V674.8" stroke="#b97e1f" stroke-width="1.8" opacity="0.8"/>
<path d="M605.0,653.1 V674.1" stroke="#b97e1f" stroke-width="1.8" opacity="0.8"/>
<path d="M601.9,652.3 V673.3" stroke="#b97e1f" stroke-width="1.8" opacity="0.8"/>
<path d="M599.2,651.4 V672.4" stroke="#b97e1f" stroke-width="1.8" opacity="0.8"/>
<path d="M596.8,650.3 V671.3" stroke="#b97e1f" stroke-width="1.8" opacity="0.8"/>
<path d="M594.7,649.2 V670.2" stroke="#b97e1f" stroke-width="1.8" opacity="0.8"/>
<path d="M592.9,648.1 V669.1" stroke="#b97e1f" stroke-width="1.8" opacity="0.8"/>
<path d="M591.5,646.9 V667.9" stroke="#b97e1f" stroke-width="1.8" opacity="0.8"/>
<path d="M590.5,645.6 V666.6" stroke="#b97e1f" stroke-width="1.8" opacity="0.8"/>
<path d="M589.9,644.3 V665.3" stroke="#b97e1f" stroke-width="1.8" opacity="0.8"/>
<polygon points="663.7,640.0 663.6,640.7 660.9,641.2 660.7,641.8 662.9,642.6 662.4,643.2 659.4,643.6 658.8,644.2 660.5,645.1 659.7,645.7 656.5,645.8 655.6,646.3 656.6,647.3 655.5,647.9 652.3,647.8 651.0,648.2 651.5,649.3 650.0,649.7 646.9,649.4 645.4,649.7 645.2,650.8 643.5,651.1 640.7,650.6 639.0,650.9 638.1,651.9 636.3,652.1 633.9,651.4 632.1,651.5 630.6,652.4 628.6,652.5 626.7,651.6 624.9,651.6 622.8,652.4 620.9,652.3 619.5,651.4 617.8,651.2 615.3,651.9 613.4,651.7 612.7,650.6 611.1,650.4 608.2,650.8 606.5,650.5 606.5,649.4 605.0,649.0 601.9,649.3 600.5,648.8 601.1,647.8 600.0,647.3 596.8,647.3 595.7,646.8 596.9,645.8 596.0,645.3 592.9,645.1 592.2,644.5 594.0,643.6 593.5,643.0 590.5,642.6 590.2,642.0 592.5,641.2 592.3,640.6 589.7,640.0 589.8,639.3 592.5,638.8 592.7,638.2 590.5,637.4 591.0,636.8 594.0,636.4 594.6,635.8 592.9,634.9 593.7,634.3 596.9,634.2 597.8,633.7 596.8,632.7 597.9,632.1 601.1,632.2 602.4,631.8 601.9,630.7 603.4,630.3 606.5,630.6 608.0,630.3 608.2,629.2 609.9,628.9 612.7,629.4 614.4,629.1 615.3,628.1 617.1,627.9 619.5,628.6 621.3,628.5 622.8,627.6 624.8,627.5 626.7,628.4 628.5,628.4 630.6,627.6 632.5,627.7 633.9,628.6 635.6,628.8 638.1,628.1 640.0,628.3 640.7,629.4 642.3,629.6 645.2,629.2 646.9,629.5 646.9,630.6 648.4,631.0 651.5,630.7 652.9,631.2 652.3,632.2 653.4,632.7 656.6,632.7 657.7,633.2 656.5,634.2 657.4,634.7 660.5,634.9 661.2,635.5 659.4,636.4 659.9,637.0 662.9,637.4 663.2,638.0 660.9,638.8 661.1,639.4" fill="#eeb23f" stroke="#f4bf55" stroke-width="1.8" stroke-linejoin="round"/>
<polygon points="741.1,633.0 741.1,659.0 739.1,659.7 740.9,660.5 738.7,661.1 740.3,661.9 737.9,662.4 739.2,663.3 736.7,663.8 737.8,664.7 735.2,665.0 735.9,666.0 733.3,666.2 733.7,667.2 731.0,667.4 731.2,668.4 728.5,668.4 728.4,669.4 725.6,669.3 725.2,670.3 722.5,670.2 721.9,671.1 719.2,670.9 718.3,671.8 715.7,671.4 714.5,672.3 712.1,671.8 710.6,672.7 708.3,672.1 706.6,672.9 704.5,672.3 702.6,673.0 700.7,672.3 698.6,672.9 696.9,672.1 694.6,672.7 693.1,671.8 690.7,672.3 689.5,671.4 686.9,671.8 686.0,670.9 683.4,671.1 682.7,670.2 680.0,670.3 679.6,669.3 676.8,669.4 676.7,668.4 674.0,668.4 674.2,667.4 671.5,667.2 671.9,666.2 669.3,666.0 670.0,665.0 667.4,664.7 668.5,663.8 666.0,663.3 667.3,662.4 664.9,661.9 666.5,661.1 664.3,660.5 666.1,659.7 664.1,659.0 664.1,633.0" fill="#dc9e30" stroke="#f4bf55" stroke-width="2" stroke-linejoin="round"/>
<path d="M740.9,637.5 V658.5" stroke="#b97e1f" stroke-width="1.8" opacity="0.8"/>
<path d="M740.3,638.9 V659.9" stroke="#b97e1f" stroke-width="1.8" opacity="0.8"/>
<path d="M739.2,640.3 V661.3" stroke="#b97e1f" stroke-width="1.8" opacity="0.8"/>
<path d="M737.8,641.7 V662.7" stroke="#b97e1f" stroke-width="1.8" opacity="0.8"/>
<path d="M735.9,643.0 V664.0" stroke="#b97e1f" stroke-width="1.8" opacity="0.8"/>
<path d="M733.7,644.2 V665.2" stroke="#b97e1f" stroke-width="1.8" opacity="0.8"/>
<path d="M731.2,645.4 V666.4" stroke="#b97e1f" stroke-width="1.8" opacity="0.8"/>
<path d="M728.4,646.4 V667.4" stroke="#b97e1f" stroke-width="1.8" opacity="0.8"/>
<path d="M725.2,647.3 V668.3" stroke="#b97e1f" stroke-width="1.8" opacity="0.8"/>
<path d="M721.9,648.1 V669.1" stroke="#b97e1f" stroke-width="1.8" opacity="0.8"/>
<path d="M718.3,648.8 V669.8" stroke="#b97e1f" stroke-width="1.8" opacity="0.8"/>
<path d="M714.5,649.3 V670.3" stroke="#b97e1f" stroke-width="1.8" opacity="0.8"/>
<path d="M710.6,649.7 V670.7" stroke="#b97e1f" stroke-width="1.8" opacity="0.8"/>
<path d="M706.6,649.9 V670.9" stroke="#b97e1f" stroke-width="1.8" opacity="0.8"/>
<path d="M702.6,650.0 V671.0" stroke="#b97e1f" stroke-width="1.8" opacity="0.8"/>
<path d="M698.6,649.9 V670.9" stroke="#b97e1f" stroke-width="1.8" opacity="0.8"/>
<path d="M694.6,649.7 V670.7" stroke="#b97e1f" stroke-width="1.8" opacity="0.8"/>
<path d="M690.7,649.3 V670.3" stroke="#b97e1f" stroke-width="1.8" opacity="0.8"/>
<path d="M686.9,648.8 V669.8" stroke="#b97e1f" stroke-width="1.8" opacity="0.8"/>
<path d="M683.4,648.1 V669.1" stroke="#b97e1f" stroke-width="1.8" opacity="0.8"/>
<path d="M680.0,647.3 V668.3" stroke="#b97e1f" stroke-width="1.8" opacity="0.8"/>
<path d="M676.8,646.4 V667.4" stroke="#b97e1f" stroke-width="1.8" opacity="0.8"/>
<path d="M674.0,645.4 V666.4" stroke="#b97e1f" stroke-width="1.8" opacity="0.8"/>
<path d="M671.5,644.2 V665.2" stroke="#b97e1f" stroke-width="1.8" opacity="0.8"/>
<path d="M669.3,643.0 V664.0" stroke="#b97e1f" stroke-width="1.8" opacity="0.8"/>
<path d="M667.4,641.7 V662.7" stroke="#b97e1f" stroke-width="1.8" opacity="0.8"/>
<path d="M666.0,640.3 V661.3" stroke="#b97e1f" stroke-width="1.8" opacity="0.8"/>
<path d="M664.9,638.9 V659.9" stroke="#b97e1f" stroke-width="1.8" opacity="0.8"/>
<path d="M664.3,637.5 V658.5" stroke="#b97e1f" stroke-width="1.8" opacity="0.8"/>
<polygon points="741.1,633.0 741.0,633.7 738.2,634.4 738.0,635.0 740.3,635.9 739.8,636.6 736.7,637.0 736.0,637.7 737.8,638.7 736.9,639.4 733.6,639.5 732.6,640.1 733.7,641.2 732.5,641.8 729.2,641.7 727.9,642.2 728.4,643.4 726.8,643.9 723.6,643.5 722.1,643.9 721.9,645.1 720.1,645.5 717.2,644.9 715.4,645.2 714.5,646.3 712.6,646.5 710.0,645.7 708.2,645.9 706.6,646.9 704.6,647.0 702.6,646.0 700.7,646.0 698.6,646.9 696.6,646.8 695.2,645.7 693.3,645.6 690.7,646.3 688.8,646.1 688.0,644.9 686.3,644.6 683.4,645.1 681.6,644.7 681.6,643.5 680.1,643.1 676.8,643.4 675.4,642.9 676.0,641.7 674.8,641.2 671.5,641.2 670.3,640.6 671.6,639.5 670.7,638.9 667.4,638.7 666.7,638.0 668.5,637.0 668.0,636.4 664.9,635.9 664.6,635.2 667.0,634.4 666.8,633.7 664.1,633.0 664.2,632.3 667.0,631.6 667.2,631.0 664.9,630.1 665.4,629.4 668.5,629.0 669.2,628.3 667.4,627.3 668.3,626.6 671.6,626.5 672.6,625.9 671.5,624.8 672.7,624.2 676.0,624.3 677.3,623.8 676.8,622.6 678.4,622.1 681.6,622.5 683.1,622.1 683.4,620.9 685.1,620.5 688.0,621.1 689.8,620.8 690.7,619.7 692.6,619.5 695.2,620.3 697.0,620.1 698.6,619.1 700.6,619.0 702.6,620.0 704.5,620.0 706.6,619.1 708.6,619.2 710.0,620.3 711.9,620.4 714.5,619.7 716.4,619.9 717.2,621.1 718.9,621.4 721.9,620.9 723.6,621.3 723.6,622.5 725.1,622.9 728.4,622.6 729.8,623.1 729.2,624.3 730.4,624.8 733.7,624.8 734.9,625.4 733.6,626.5 734.5,627.1 737.8,627.3 738.5,628.0 736.7,629.0 737.2,629.6 740.3,630.1 740.6,630.8 738.2,631.6 738.4,632.3" fill="#eeb23f" stroke="#f4bf55" stroke-width="1.8" stroke-linejoin="round"/>
<clipPath id="shh"><ellipse cx="628.5" cy="567" rx="26" ry="12"/></clipPath>
<g opacity="0.35">
<path d="M610.5,575.5 L610.5,646 A18.5,7 0 0 0 647.5,646 L647.5,575.5 Z" fill="#e6a83a" stroke="none" stroke-width="1" stroke-linejoin="round" />
</g>
<path d="M610.5,604 L610.5,646 A18.5,7 0 0 0 647.5,646 L647.5,604 A18.5,7 0 0 0 610.5,604 Z" fill="#e4a73a" stroke="none" stroke-width="1" stroke-linejoin="round" />
<path d="M610.5,575.5 L610.5,646 A18.5,7 0 0 0 647.5,646 L647.5,575.5" fill="none" stroke="#f4bf55" stroke-width="1.6" stroke-linejoin="round" />
<ellipse cx="629.0" cy="575.5" rx="18.5" ry="7" fill="none" stroke="#f4bf55" stroke-width="1.6" />
<ellipse cx="629.0" cy="600.0" rx="18.5" ry="9" fill="none" stroke="#f4bf55" stroke-width="1.5" />
<rect x="617" y="576" width="24" height="6" fill="#222"/>
<g opacity="0.35">
<path d="M682.0,568 L682.0,655 A19.5,7 0 0 0 721.0,655 L721.0,568 Z" fill="#e6a83a" stroke="none" stroke-width="1" stroke-linejoin="round" />
</g>
<path d="M682.0,598 L682.0,655 A19.5,7 0 0 0 721.0,655 L721.0,598 A19.5,7 0 0 0 682.0,598 Z" fill="#e4a73a" stroke="none" stroke-width="1" stroke-linejoin="round" />
<path d="M682.0,568 L682.0,655 A19.5,7 0 0 0 721.0,655 L721.0,568" fill="none" stroke="#f4bf55" stroke-width="1.6" stroke-linejoin="round" />
<ellipse cx="701.5" cy="568.0" rx="19.5" ry="7" fill="none" stroke="#f4bf55" stroke-width="1.6" />
<ellipse cx="701.5" cy="590.0" rx="19.5" ry="9" fill="none" stroke="#f4bf55" stroke-width="1.5" />
<path d="M1205,772 Q1215,768 1225,772 L1225,834 Q1215,838 1205,834 Z" fill="#1c1c1c" stroke="none" stroke-width="1" stroke-linejoin="round" />
<path d="M1238,782 L1252,778 L1268,814 L1254,818 Z" fill="#1c1c1c" stroke="none" stroke-width="1" stroke-linejoin="round" />
<path d="M1082,731 L1082,742 Q1084,748 1092,750 L1310,796 L1344,784 L1344,775 L1310,786 L1092,740 Q1083,738 1082,731 Z" fill="url(#gside)" stroke="#262626" stroke-width="1" stroke-linejoin="round" />
<path d="M1160,663 Q1166,658 1172,662 L1330,745 Q1350,760 1340,778 Q1325,790 1300,785 L1092,740 Q1078,736 1084,726 Z" fill="#ececec" stroke="#262626" stroke-width="1.1" stroke-linejoin="round" />
<clipPath id="c9"><polygon points="1152.0,671.0 1169.0,671.0 1200.0,719.0 1141.0,695.0"/></clipPath>
<polygon points="1152.0,671.0 1169.0,671.0 1200.0,719.0 1141.0,695.0" fill="#8e8e8e"/>
<g clip-path="url(#c9)">
<polygon points="1152.0,678.0 1169.0,678.0 1200.0,726.0 1141.0,702.0" fill="#3b9a3f"/>
</g>
<polygon points="1152.0,671.0 1169.0,671.0 1200.0,719.0 1141.0,695.0" fill="none" stroke="#262626" stroke-width="1" stroke-linejoin="round"/>
<clipPath id="c10"><polygon points="1115.0,703.0 1140.0,703.0 1190.0,728.0 1100.0,725.0"/></clipPath>
<polygon points="1115.0,703.0 1140.0,703.0 1190.0,728.0 1100.0,725.0" fill="#8e8e8e"/>
<g clip-path="url(#c10)">
<polygon points="1115.0,710.0 1140.0,710.0 1190.0,735.0 1100.0,732.0" fill="#3b9a3f"/>
</g>
<polygon points="1115.0,703.0 1140.0,703.0 1190.0,728.0 1100.0,725.0" fill="none" stroke="#262626" stroke-width="1" stroke-linejoin="round"/>
<clipPath id="c11"><polygon points="1126.0,732.0 1200.0,734.0 1212.0,744.0 1207.0,756.0"/></clipPath>
<polygon points="1126.0,732.0 1200.0,734.0 1212.0,744.0 1207.0,756.0" fill="#8e8e8e"/>
<g clip-path="url(#c11)">
<polygon points="1126.0,738.0 1200.0,740.0 1212.0,750.0 1207.0,762.0" fill="#3b9a3f"/>
</g>
<polygon points="1126.0,732.0 1200.0,734.0 1212.0,744.0 1207.0,756.0" fill="none" stroke="#262626" stroke-width="1" stroke-linejoin="round"/>
<clipPath id="c12"><polygon points="1183.0,679.0 1252.0,713.0 1222.0,727.0"/></clipPath>
<polygon points="1183.0,679.0 1252.0,713.0 1222.0,727.0" fill="#8e8e8e"/>
<g clip-path="url(#c12)">
<polygon points="1183.0,686.0 1252.0,720.0 1222.0,734.0" fill="#3b9a3f"/>
</g>
<polygon points="1183.0,679.0 1252.0,713.0 1222.0,727.0" fill="none" stroke="#262626" stroke-width="1" stroke-linejoin="round"/>
<clipPath id="c13"><polygon points="1218.0,740.0 1274.0,754.0 1270.0,770.0 1216.0,760.0"/></clipPath>
<polygon points="1218.0,740.0 1274.0,754.0 1270.0,770.0 1216.0,760.0" fill="#8e8e8e"/>
<g clip-path="url(#c13)">
<polygon points="1218.0,746.0 1274.0,760.0 1270.0,776.0 1216.0,766.0" fill="#3a3a3a"/>
</g>
<polygon points="1218.0,740.0 1274.0,754.0 1270.0,770.0 1216.0,760.0" fill="none" stroke="#262626" stroke-width="1" stroke-linejoin="round"/>
<clipPath id="c14"><polygon points="1228.0,731.0 1262.0,716.0 1272.0,736.0"/></clipPath>
<polygon points="1228.0,731.0 1262.0,716.0 1272.0,736.0" fill="#8e8e8e"/>
<g clip-path="url(#c14)">
<polygon points="1228.0,737.0 1262.0,722.0 1272.0,742.0" fill="#ffffff"/>
</g>
<polygon points="1228.0,731.0 1262.0,716.0 1272.0,736.0" fill="none" stroke="#262626" stroke-width="1" stroke-linejoin="round"/>
<ellipse cx="1165.0" cy="666.0" rx="4" ry="2.4" fill="#9e9e9e" stroke="#262626" stroke-width="0.9" />
<ellipse cx="1128.5" cy="697.3" rx="4" ry="2.4" fill="#9e9e9e" stroke="#262626" stroke-width="0.9" />
<ellipse cx="1092.4" cy="729.2" rx="4" ry="2.4" fill="#9e9e9e" stroke="#262626" stroke-width="0.9" />
<ellipse cx="1216.0" cy="732.7" rx="4" ry="2.4" fill="#9e9e9e" stroke="#262626" stroke-width="0.9" />
<ellipse cx="1319.0" cy="764.0" rx="25" ry="15" fill="#cfcfcf" stroke="#262626" stroke-width="1" />
<ellipse cx="1319.0" cy="763.0" rx="19" ry="11" fill="#999" stroke="#262626" stroke-width="0.9" />
<ellipse cx="1319.0" cy="762.0" rx="13" ry="7" fill="#555" stroke="#262626" stroke-width="0.9" />
<path d="M1224.5,591 Q1226,572 1254,565.6 Q1262,563 1270,566 L1334.6,591 Q1341,594 1341.3,600 L1341.3,715.8 Q1330,737 1299,737 L1265.6,733.6 Q1230,728 1224.5,713.5 Z" fill="url(#gmot)" stroke="#f4bf55" stroke-width="1.6" stroke-linejoin="round" />
<path d="M1227.8,615.7 Q1250,632 1283.4,631.2 Q1320,630 1338,613.4" fill="none" stroke="#c98e2e" stroke-width="1" stroke-linejoin="round" />
<path d="M1226,600 Q1227,573 1254,566.5 Q1262,564 1270,567 L1334,592 Q1340,595 1340,601 L1338,613.4 Q1320,630 1283.4,631.2 Q1250,632 1227.8,615.7 Z" fill="#f1b94f" stroke="none" stroke-width="1" stroke-linejoin="round" />
<path d="M1240,583 Q1290,600 1336,600" fill="none" stroke="#c98e2e" stroke-width="0.8" stroke-linejoin="round" />
<text x="1262" y="578" font-family="Liberation Sans" font-size="10" font-weight="bold" font-style="italic" fill="#9a6a1a" transform="rotate(24 1262 578)">X60 KRAKEN</text>
<rect x="1296" y="537" width="25" height="300" fill="url(#gshaft)"/>
<path d="M1308,542 V830" stroke="#0b0b0b" stroke-width="1"/>
<ellipse cx="1308.5" cy="538.0" rx="12.5" ry="6" fill="#262626" stroke="#111" stroke-width="1" />
<ellipse cx="1308.5" cy="538.0" rx="4.5" ry="2.3" fill="#111" stroke="#333" stroke-width="0.8" />
<path d="M1296,577 h25 v-4" fill="none" stroke="#f4bf55" stroke-width="1.5"/>
<ellipse cx="1308.0" cy="859.0" rx="77" ry="36" fill="#efb341" stroke="#f4bf55" stroke-width="1.6" />
<path d="M1231,836 L1231,855 A77,35 0 0 0 1385,855 L1385,836 Z" fill="#1c1c1c" stroke="none" stroke-width="1" stroke-linejoin="round" />
<ellipse cx="1308.0" cy="834.0" rx="78" ry="37" fill="#efb341" stroke="#f4bf55" stroke-width="1.6" />
<path d="M1286,896 L1286,906 Q1315,918 1345,906 L1345,896 Z" fill="#1c1c1c" stroke="none" stroke-width="1" stroke-linejoin="round" />
<g opacity="0.8">
<path d="M1290,774 L1290,862 A19,9 0 0 0 1328,862 L1328,774 Z" fill="#e3a53a" stroke="#f4bf55" stroke-width="1.4" stroke-linejoin="round" />
</g>
<ellipse cx="1309.0" cy="774.0" rx="19" ry="8" fill="#e9b04c" stroke="#f4bf55" stroke-width="1.5" />
<ellipse cx="1309.0" cy="790.0" rx="19" ry="8" fill="none" stroke="#f4bf55" stroke-width="1" />
<ellipse cx="1309.0" cy="806.0" rx="19" ry="8" fill="none" stroke="#d49630" stroke-width="1" />
<ellipse cx="1309.0" cy="846.0" rx="21" ry="9" fill="none" stroke="#d49630" stroke-width="2" stroke-dasharray="3 2"/>
<path d="M1260.5,724.5 V771 A21.5,14 0 0 0 1303.5,771 V724.5" fill="none" stroke="#f4bf55" stroke-width="1.5"/>
<ellipse cx="1282.0" cy="724.5" rx="21.5" ry="10" fill="none" stroke="#f4bf55" stroke-width="1.5" />
<path d="M1293.4,679 L1336.8,653.5 M1335.7,652.4 L1363.5,650.1 L1343.5,671.3 Z M1361,648.6 a9,4.5 0 1 0 18,0 a9,4.5 0 1 0 -18,0 M1353.5,640 L1382.4,659" fill="none" stroke="#8c8c8c" stroke-width="3.2" stroke-linejoin="round" stroke-linecap="round"/>
<path d="M1293.4,679 L1336.8,653.5 M1335.7,652.4 L1363.5,650.1 L1343.5,671.3 Z M1361,648.6 a9,4.5 0 1 0 18,0 a9,4.5 0 1 0 -18,0 M1353.5,640 L1382.4,659" fill="none" stroke="#f2f2f2" stroke-width="1.6" stroke-linejoin="round" stroke-linecap="round"/>
<path d="M1313.4,684.6 L1330,676.8 L1346.8,685.7 L1330,693.5 Z M1292.3,686.9 L1314.6,702.4 M1301,693 L1319,686 L1319,709 L1301,716 Z M1301,693 L1319,709 M1298,710 L1312,716 L1312,739 L1298,732 Z M1331.2,701.3 L1343.5,713.5 L1323.5,718 Z M1345.7,722.4 a4.5,8.5 0 1 0 9,0 a4.5,8.5 0 1 0 -9,0 M1350,703.5 V742.5" fill="none" stroke="#8c8c8c" stroke-width="3.2" stroke-linejoin="round" stroke-linecap="round"/>
<path d="M1313.4,684.6 L1330,676.8 L1346.8,685.7 L1330,693.5 Z M1292.3,686.9 L1314.6,702.4 M1301,693 L1319,686 L1319,709 L1301,716 Z M1301,693 L1319,709 M1298,710 L1312,716 L1312,739 L1298,732 Z M1331.2,701.3 L1343.5,713.5 L1323.5,718 Z M1345.7,722.4 a4.5,8.5 0 1 0 9,0 a4.5,8.5 0 1 0 -9,0 M1350,703.5 V742.5" fill="none" stroke="#f2f2f2" stroke-width="1.6" stroke-linejoin="round" stroke-linecap="round"/>
<path d="M1285.6,691 V768 M1275.8,740.8 L1294.2,740.8 L1285,765.2 Z M1280,775.4 a6,5 0 1 0 12,0 a6,5 0 1 0 -12,0 M1267.7,781.5 L1302.3,767.3" fill="none" stroke="#8c8c8c" stroke-width="3.2" stroke-linejoin="round" stroke-linecap="round"/>
<path d="M1285.6,691 V768 M1275.8,740.8 L1294.2,740.8 L1285,765.2 Z M1280,775.4 a6,5 0 1 0 12,0 a6,5 0 1 0 -12,0 M1267.7,781.5 L1302.3,767.3" fill="none" stroke="#f2f2f2" stroke-width="1.6" stroke-linejoin="round" stroke-linecap="round"/>
<circle cx="1285.6" cy="682.4" r="8.5" fill="none" stroke="#8c8c8c" stroke-width="3.4"/><circle cx="1285.6" cy="682.4" r="8.5" fill="none" stroke="#f2f2f2" stroke-width="1.8"/>
</svg><!-- TOP BAR -->
<svg class="a" style="left:13px;top:6px" width="26" height="28" viewBox="0 0 26 28">
<polygon points="13,0.5 25,7.3 25,20.7 13,27.5 1,20.7 1,7.3" fill="#5db54a"/>
<polygon points="13,6.5 19.5,10.2 19.5,17.8 13,21.5 6.5,17.8 6.5,10.2" fill="#e9e9e9"/>
<path d="M13,0.5 L9,9 M25,20.7 L17,16 M1,20.7 L10,19" stroke="#e9e9e9" stroke-width="1.3"/>
<path d="M15.5,9.8 L18,11.3 V17 L13,19.8 L10.5,18.4 M8,15.5 V11 L13,8.2" fill="none" stroke="#555" stroke-width="1.6"/>
</svg>
<div class="t" style="left:47px;top:9px;font-size:20.5px;color:#666;letter-spacing:1px">onshape</div>
<svg class="a" style="left:147px;top:14px" width="16" height="14" viewBox="0 0 16 14"><rect y="0" width="16" height="2.6" fill="#333"/><rect y="5.7" width="16" height="2.6" fill="#333"/><rect y="11.4" width="16" height="2.6" fill="#333"/></svg>
<div class="t" style="left:174px;top:10px;font-size:20.5px;font-weight:bold;color:#333;letter-spacing:0.35px">1C - Practice Exercise Solutions</div>
<div class="t" style="left:509px;top:15px;font-size:15.2px;color:#9a9a9a">FRCDesignLib Rework</div>
<svg class="a" style="left:678px;top:15px" width="15" height="14" viewBox="0 0 15 14"><g fill="none" stroke="#444" stroke-width="1.8"><rect x="1.5" y="6" width="7" height="4.5" rx="2.2" transform="rotate(-40 5 8)"/><rect x="6.5" y="3" width="7" height="4.5" rx="2.2" transform="rotate(-40 10 5)"/></g></svg>
<svg class="a" style="left:703px;top:15px" width="18" height="14" viewBox="0 0 18 14"><path d="M1 1.5h5.5l1.5 2h9v9.5h-16z" fill="none" stroke="#888" stroke-width="1.3"/></svg>
<div class="t" style="left:726px;top:14px;font-size:15px;color:#888">Stage 1</div>
<svg class="a" style="left:831px;top:12px" width="17" height="15" viewBox="0 0 17 15"><path d="M0 5L8.5 1 17 5 8.5 9z" fill="#1f5fbf"/><path d="M3.5 7v4.5q5 2.5 10 0V7L8.5 9.5z" fill="#1f5fbf"/><rect x="0.6" y="5" width="1.2" height="8" fill="#1f5fbf"/></svg>
<svg class="a" style="left:856px;top:11px" width="18" height="18" viewBox="0 0 18 18"><circle cx="9" cy="9" r="8" fill="none" stroke="#333" stroke-width="1.6"/><path d="M4 4q2 1 3 3t-1 3 1 4l-2 1q-2-3-2-6zM10 3q3 1 4 3l-2 1-2-1zM11 10l3 0q0 3-2 5l-1-2z" fill="#333"/></svg>
<svg class="a" style="left:885px;top:12px" width="18" height="17" viewBox="0 0 18 17"><path d="M1 2.5h4v13h-4z M4 1h4v2" fill="none" stroke="#333" stroke-width="1.5"/><path d="M7 4.5h6l3 3v8.5h-9z" fill="none" stroke="#333" stroke-width="1.5"/></svg>
<div class="t" style="left:910px;top:13px;font-size:14px;color:#333">436</div>
<svg class="a" style="left:951px;top:11px" width="10" height="18" viewBox="0 0 10 18"><g fill="#333"><rect x="4" y="0" width="2" height="2.5"/><rect x="4" y="4" width="2" height="2"/><circle cx="5" cy="9" r="3"/><rect x="4" y="12.5" width="2" height="2"/><rect x="4" y="16" width="2" height="2"/></g></svg>
<div class="t" style="left:973px;top:13px;font-size:13.5px;color:#333">3977</div>
<svg class="a" style="left:1017px;top:10px" width="18" height="18" viewBox="0 0 18 18"><path d="M1 8h3.5v9H1z M4.5 8.5l4-7q2 0 2 2.5l-1 3.5h6q2 0 1.8 2l-1.3 6q-.4 1.8-2 1.8H4.5" fill="none" stroke="#333" stroke-width="1.5" stroke-linejoin="round"/></svg>
<div class="t" style="left:1042px;top:13px;font-size:14px;color:#333">3</div>

<svg class="a" style="left:1514px;top:13px" width="22" height="18" viewBox="0 0 22 18"><path d="M5 1q-2.5 0-2.5 2.5v3q0 2-1.8 2.5 1.8.5 1.8 2.5v3q0 2.5 2.5 2.5M17 1q2.5 0 2.5 2.5v3q0 2 1.8 2.5-1.8.5-1.8 2.5v3q0 2.5-2.5 2.5" fill="none" stroke="#333" stroke-width="1.6"/><path d="M7 8.5l3 3.5 5-7" fill="none" stroke="#333" stroke-width="1.8"/></svg>
<svg class="a" style="left:1548px;top:13px" width="18" height="19" viewBox="0 0 18 19"><path d="M9 1q5 0 5.5 6v4l2.5 4H1l2.5-4V7Q4 1 9 1zM6.5 16.5h5q-1 2.5-2.5 2.5t-2.5-2.5" fill="#333"/></svg>
<div class="a" style="left:1557px;top:6px;width:16px;height:15px;background:#1f5fbf;border-radius:3px;border:1px solid #e9e9e9"></div>
<div class="t" style="left:1559px;top:8px;font-size:10.5px;font-weight:bold;color:#fff">9+</div>
<svg class="a" style="left:1581px;top:13px" width="17" height="18" viewBox="0 0 17 18"><rect x="0.8" y="0.8" width="15.4" height="16.4" rx="2" fill="none" stroke="#333" stroke-width="1.5"/><path d="M3 4.5l1 1 2-2M3 9l1 1 2-2M3 13.5l1 1 2-2" fill="none" stroke="#333" stroke-width="1.1"/><path d="M8 4.5h6M8 9h6M8 13.5h6" stroke="#333" stroke-width="1.4"/></svg>
<svg class="a" style="left:1612px;top:14px" width="18" height="17" viewBox="0 0 18 17"><g fill="none" stroke="#333" stroke-width="1.6"><rect x="1" y="1" width="6" height="6"/><rect x="1" y="10" width="6" height="6"/><rect x="10" y="10" width="6" height="6"/><path d="M13 0.5v7M9.5 4h7"/></g></svg>
<svg class="a" style="left:1645px;top:14px" width="18" height="17" viewBox="0 0 18 17"><path d="M9 0.5q8 0 8.5 7l-1.5 2v3.5h-3v4H6v-3q-5-2-5-7Q1.5.5 9 .5z" fill="#333"/><circle cx="7.5" cy="7" r="2.3" fill="none" stroke="#e9e9e9" stroke-width="1.2"/><circle cx="11.5" cy="4.5" r="1.5" fill="none" stroke="#e9e9e9" stroke-width="1"/></svg>
<div class="a" style="left:1673px;top:3px;width:59px;height:33px;background:#1b58b8;border-radius:5px"></div>
<div class="t" style="left:1685px;top:13px;font-size:13.6px;color:#fff">Share</div>
<svg class="a" style="left:1743px;top:13px" width="19" height="19" viewBox="0 0 19 19"><circle cx="9.5" cy="9.5" r="9" fill="#333"/><path d="M6.5 7q0-3 3-3t3 2.7q0 1.6-2 2.6-1 .6-1 2" fill="none" stroke="#e9e9e9" stroke-width="2"/><circle cx="9.5" cy="14.3" r="1.3" fill="#e9e9e9"/></svg>
<svg class="a" style="left:1769px;top:18px" width="9" height="6" viewBox="0 0 9 6"><path d="M0 0h9L4.5 5z" fill="#333"/></svg>
<svg class="a" style="left:1789px;top:10px" width="25" height="24" viewBox="0 0 25 24"><rect width="25" height="24" fill="#0b0b0b"/><polygon points="12.5,2.5 21,7.2 21,16.8 12.5,21.5 4,16.8 4,7.2" fill="none" stroke="#1fa3a8" stroke-width="2"/><path d="M16.5 8.5q-2-1.7-4.5-1.3T9 9.5t3.5 2.5 3.8 2.5-3.3 2.6-4-1.2" fill="none" stroke="#1fa3a8" stroke-width="2"/></svg>
<div class="t" style="left:1819px;top:14px;font-size:13.8px;color:#333">Andrew Card</div>
<svg class="a" style="left:1906px;top:18px" width="9" height="6" viewBox="0 0 9 6"><path d="M0 0h9L4.5 5z" fill="#333"/></svg>

<!-- TOOLBAR -->
<svg class="a" style="left:10px;top:49px" width="21" height="19" viewBox="0 0 21 19"><g fill="none" stroke="#333" stroke-width="1.7"><circle cx="4.5" cy="4" r="3"/><path d="M4.5 7v10M4.5 14q5 0 5-5"/><path d="M10 2h10M11 7h9M11 12h9M10 17h10"/></g><circle cx="4.5" cy="17" r="1.6" fill="#333"/><circle cx="10" cy="8.5" r="1.6" fill="#333"/></svg>
<svg class="a" style="left:50px;top:50px" width="15" height="14" viewBox="0 0 15 14"><path d="M0.5 6L6 1v3q8 0 8 9.5q-2-5-8-5v3z" fill="#333"/></svg>
<svg class="a" style="left:85px;top:50px" width="15" height="14" viewBox="0 0 15 14"><path d="M14.5 6L9 1v3Q1 4 1 13.5q2-5 8-5v3z" fill="#8a8a8a"/></svg>
<div class="sep" style="left:110px"></div>
<svg class="a" style="left:120px;top:47px" width="21" height="21" viewBox="0 0 21 21"><circle cx="10.5" cy="10.5" r="9.5" fill="#5b8fd0"/><circle cx="10.5" cy="10.5" r="5.5" fill="none" stroke="#e8f0fa" stroke-width="2.2"/><path d="M11 11l6 6" stroke="#5b8fd0" stroke-width="3"/><path d="M12 12l4 4" stroke="#e8f0fa" stroke-width="1.6"/></svg>
<div class="sep" style="left:148px"></div>
<svg class="a" style="left:160px;top:49px" width="16" height="17" viewBox="0 0 16 17"><path d="M1 3.5h9l4 4v8.5H1z" fill="none" stroke="#333" stroke-width="1.3"/><path d="M4 1h5l3 3" fill="none" stroke="#333" stroke-width="1.2"/><path d="M7 5v6l-2-2m2 2l2-2" fill="none" stroke="#333" stroke-width="1.6"/></svg>
<div class="t" style="left:182px;top:51px;font-size:14px;color:#333">Insert</div>
<div class="sep" style="left:230px"></div>
<svg class="a" style="left:240px;top:48px" width="20" height="20" viewBox="0 0 20 20"><circle cx="10" cy="10" r="9" fill="none" stroke="#444" stroke-width="1.3"/><circle cx="10" cy="10" r="6.8" fill="none" stroke="#444" stroke-width="1.3"/><path d="M9 5v6h6" fill="none" stroke="#444" stroke-width="1.5"/></svg>
<div class="sep" style="left:268px"></div>
<svg class="a" style="left:279px;top:48px" width="18" height="20" viewBox="0 0 18 20"><path d="M1 4v11q8 6 16 0V4" fill="#777" stroke="#333" stroke-width="1.3"/><ellipse cx="9" cy="4" rx="8" ry="3.2" fill="#fff" stroke="#333" stroke-width="1.3"/><path d="M5 8v4q4 3 8 0V8" fill="#fff" stroke="#333" stroke-width="1"/></svg>
<svg class="a" style="left:311px;top:48px" width="22" height="20" viewBox="0 0 22 20"><path d="M3 4v12q8 5 16 0V4" fill="#fff" stroke="#333" stroke-width="1.2"/><ellipse cx="11" cy="4" rx="8" ry="3" fill="#fff" stroke="#333" stroke-width="1.2"/><path d="M1 10q0 4 5 5M21 10q0 4-5 5" fill="none" stroke="#333" stroke-width="1.8"/><path d="M7 13l1 3-3 0zM15 13l-1 3 3 0z" fill="#333"/></svg>
<svg class="a" style="left:345px;top:47px" width="22" height="21" viewBox="0 0 22 21"><path d="M5 7v11q6 4 12 0V7" fill="#fff" stroke="#333" stroke-width="1.2"/><ellipse cx="11" cy="7" rx="6" ry="2.6" fill="#fff" stroke="#333" stroke-width="1.2"/><path d="M11 8V2" stroke="#333" stroke-width="1.6"/><path d="M8 3.5L11 0l3 3.5z" fill="#333"/><path d="M1.5 9v9M20.5 9v9" stroke="#333" stroke-width="2"/></svg>
<svg class="a" style="left:380px;top:48px" width="20" height="20" viewBox="0 0 20 20"><rect x="1" y="1" width="18" height="18" fill="none" stroke="#444" stroke-width="1.1"/><path d="M10 2v16M2 10h16" stroke="#333" stroke-width="1.7"/><path d="M7 5l3-4 3 4zM7 15l3 4 3-4zM5 7l-4 3 4 3zM15 7l4 3-4 3z" fill="#333"/></svg>
<svg class="a" style="left:413px;top:47px" width="22" height="21" viewBox="0 0 22 21"><path d="M4 7v9q7 4 14 0V7" fill="#fff" stroke="#333" stroke-width="1.2"/><ellipse cx="11" cy="7" rx="7" ry="2.6" fill="#fff" stroke="#333" stroke-width="1.2"/><path d="M11 7V2" stroke="#333" stroke-width="1.5"/><path d="M8.5 3L11 0l2.5 3z" fill="#333"/><path d="M1 11q0 4 5 5M21 11q0 4-5 5" fill="none" stroke="#333" stroke-width="1.8"/></svg>
<svg class="a" style="left:447px;top:47px" width="22" height="21" viewBox="0 0 22 21"><path d="M8 4v11q3 2 6 0V4" fill="#fff" stroke="#444" stroke-width="1.1"/><ellipse cx="11" cy="4" rx="3" ry="1.5" fill="#fff" stroke="#444" stroke-width="1.1"/><rect x="4" y="15" width="14" height="4" rx="2" fill="#fff" stroke="#444" stroke-width="1.1"/><path d="M1 9h20" stroke="#333" stroke-width="1.6"/><path d="M4 6.5L0.5 9 4 11.5zM18 6.5L21.5 9 18 11.5z" fill="#333"/></svg>
<svg class="a" style="left:481px;top:47px" width="21" height="21" viewBox="0 0 21 21"><circle cx="10.5" cy="10.5" r="7.5" fill="none" stroke="#333" stroke-width="1.6"/><path d="M10.5 2v17M2 10.5h17" stroke="#333" stroke-width="1.6"/><path d="M8 3L10.5 0 13 3zM8 18l2.5 3 2.5-3zM3 8L0 10.5 3 13zM18 8l3 2.5-3 2.5z" fill="#333"/></svg>
<svg class="a" style="left:515px;top:48px" width="21" height="20" viewBox="0 0 21 20"><path d="M1 4l6-3v15l-6 3zM14 4l6-3v15l-6 3z" fill="none" stroke="#555" stroke-width="1"/><path d="M5 10h11" stroke="#333" stroke-width="1.6"/><path d="M7 7.5l-3 2.5 3 2.5zM14 7.5l3 2.5-3 2.5z" fill="#333"/></svg>
<div class="sep" style="left:544px"></div>
<svg class="a" style="left:554px;top:48px" width="20" height="20" viewBox="0 0 20 20"><path d="M1 19q1-12 13-14" fill="none" stroke="#666" stroke-width="0.9"/><circle cx="11" cy="9" r="6" fill="none" stroke="#666" stroke-width="0.9"/><path d="M3 2l10 13" stroke="#333" stroke-width="1.6"/><path d="M2 0.5l4 1-2.5 2.5zM15.5 18l-4-1.5 3-2z" fill="#333"/></svg>
<svg class="a" style="left:587px;top:48px" width="20" height="20" viewBox="0 0 20 20"><path d="M1.2 1v18M18.8 1v18" stroke="#333" stroke-width="1.8"/><rect x="5" y="4" width="10" height="12" rx="1.5" fill="#ddd" stroke="#555" stroke-width="1"/><path d="M3 10h14" stroke="#333" stroke-width="1.5"/><path d="M7 7.5l3 2.5-3 2.5zM13 7.5l-3 2.5 3 2.5z" fill="#333"/></svg>
<div class="sep" style="left:616px"></div>
<svg class="a" style="left:626px;top:48px" width="19" height="19" viewBox="0 0 19 19"><rect x="1.5" y="1.5" width="16" height="16" fill="none" stroke="#333" stroke-width="1" stroke-dasharray="2 2"/><rect x="5" y="5" width="6" height="6" fill="#fff" stroke="#333" stroke-width="1.1"/><rect x="8" y="8" width="6" height="6" fill="none" stroke="#333" stroke-width="1.1"/></svg>
<svg class="a" style="left:660px;top:47px" width="20" height="21" viewBox="0 0 20 21"><path d="M6 8v9q6 4 12 0V8" fill="#fff" stroke="#333" stroke-width="1.3"/><ellipse cx="12" cy="8" rx="6" ry="2.6" fill="#fff" stroke="#333" stroke-width="1.3"/><path d="M9 11v3q3 2 6 0v-3" fill="none" stroke="#333" stroke-width="1"/><path d="M6 1l1.8 4 4.2.3-3.2 2.8 1 4.1L6 10l-3.8 2.2 1-4.1L0 5.3l4.2-.3z" fill="#222"/></svg>
<svg class="a" style="left:694px;top:47px" width="20" height="21" viewBox="0 0 20 21"><path d="M1 4v11q7 4 13 0V4" fill="#fff" stroke="#333" stroke-width="1.2"/><ellipse cx="7.5" cy="4" rx="6.5" ry="2.8" fill="#fff" stroke="#333" stroke-width="1.2"/><path d="M4 9v3q3.5 2 7 0V9" fill="none" stroke="#333" stroke-width="1"/><path d="M10 9l9 5-4 1 2.5 4-1.5 1-2.5-4-3 3z" fill="#222"/></svg>
<svg class="a" style="left:728px;top:47px" width="20" height="21" viewBox="0 0 20 21"><path d="M1 12l4-3h12l2 2v7l-3 2H1z" fill="#fff" stroke="#333" stroke-width="1.2"/><path d="M1 12h15l3-2M16 12v8" fill="none" stroke="#333" stroke-width="1"/><ellipse cx="6" cy="10" rx="2.5" ry="1.5" fill="#fff" stroke="#333"/><rect x="11" y="3" width="4" height="6" rx="1" fill="#fff" stroke="#333"/><circle cx="13" cy="3" r="2.5" fill="#fff" stroke="#333"/></svg>
<svg class="a" style="left:762px;top:47px" width="20" height="21" viewBox="0 0 20 21"><path d="M1 3h4v5h5v3H1z M11 11h4v5h4v3h-8z" fill="#fff" stroke="#333" stroke-width="1.2"/><path d="M3 12v4h6" fill="none" stroke="#333" stroke-width="1.1"/><path d="M8 14l2 2-2 2z" fill="#333"/></svg>
<svg class="a" style="left:796px;top:48px" width="19" height="19" viewBox="0 0 19 19"><rect x="1" y="1" width="8" height="8" fill="#fff" stroke="#333" stroke-width="1.2"/><rect x="10" y="1" width="8" height="8" fill="#888" stroke="#333" stroke-width="1.2"/><rect x="1" y="10" width="8" height="8" fill="#888" stroke="#333" stroke-width="1.2"/><rect x="10" y="10" width="8" height="8" fill="#888" stroke="#333" stroke-width="1.2"/></svg>
<svg class="a" style="left:830px;top:48px" width="20" height="19" viewBox="0 0 20 19"><g fill="#888" stroke="#333" stroke-width="1"><circle cx="5" cy="10" r="3.5"/><circle cx="15" cy="10" r="3.5"/><circle cx="10" cy="14" r="3"/><circle cx="10" cy="6" r="3"/><circle cx="8" cy="3" r="2" fill="#fff"/></g></svg>
<svg class="a" style="left:864px;top:48px" width="20" height="20" viewBox="0 0 20 20"><path d="M1 3l3-2 3 2v15H1z" fill="#fff" stroke="#333" stroke-width="1.1"/><path d="M4 1v2H1M7 3v15" fill="none" stroke="#333"/><path d="M11 10l3-9 5 2v16h-5v-7z" fill="#888" stroke="#333" stroke-width="1.1"/></svg>
<div class="sep" style="left:891px"></div>
<svg class="a" style="left:901px;top:48px" width="20" height="19" viewBox="0 0 20 19"><circle cx="6" cy="6" r="3.5" fill="none" stroke="#333" stroke-width="2.5" stroke-dasharray="1.6 1.2"/><circle cx="13.5" cy="12.5" r="4" fill="none" stroke="#333" stroke-width="3" stroke-dasharray="1.8 1.4"/><circle cx="6" cy="6" r="2.6" fill="none" stroke="#333" stroke-width="1.6"/><circle cx="13.5" cy="12.5" r="3" fill="none" stroke="#333" stroke-width="1.8"/></svg>
<svg class="a" style="left:936px;top:48px" width="20" height="19" viewBox="0 0 20 19"><circle cx="10" cy="8" r="5" fill="none" stroke="#333" stroke-width="3.5" stroke-dasharray="2 1.6"/><circle cx="10" cy="8" r="3.5" fill="none" stroke="#333" stroke-width="2"/><path d="M1 17h18" stroke="#333" stroke-width="2"/><path d="M2 15l2-2h12l2 2z" fill="#333"/></svg>
<svg class="a" style="left:970px;top:47px" width="20" height="21" viewBox="0 0 20 21"><path d="M3 2v10M7 2v10M11 2v10M15 2v10" stroke="#333" stroke-width="1.6"/><path d="M1 6q9-3 18 0M1 10q9-3 18 0" fill="none" stroke="#333" stroke-width="1.3"/><path d="M3 17h13" stroke="#333" stroke-width="1.5"/><path d="M15 14.5l4 2.5-4 2.5z" fill="#333"/></svg>
<svg class="a" style="left:1003px;top:48px" width="21" height="19" viewBox="0 0 21 19"><rect x="5" y="1" width="15" height="7" rx="3.5" fill="none" stroke="#666" stroke-width="1"/><rect x="1" y="11" width="15" height="7" rx="3.5" fill="none" stroke="#666" stroke-width="1"/><path d="M1 4.5h7M12 14.5h8" stroke="#333" stroke-width="1.5"/><path d="M3.5 2L0.5 4.5 3.5 7zM17.5 12l3 2.5-3 2.5z" fill="#333"/></svg>
<div class="sep" style="left:1032px"></div>
<svg class="a" style="left:1042px;top:47px" width="20" height="21" viewBox="0 0 20 21"><path d="M1 1h13v9M10 17H1V1" fill="none" stroke="#333" stroke-width="1.2"/><path d="M4 5h7M4 8h7M4 11h4" stroke="#333" stroke-width="1.1"/><ellipse cx="14" cy="15" rx="5" ry="3" fill="none" stroke="#333" stroke-width="1.2"/><path d="M9 20l10-9" stroke="#333" stroke-width="1.2"/></svg>
<svg class="a" style="left:1076px;top:47px" width="20" height="21" viewBox="0 0 20 21"><path d="M2 10h5v10H2z M8 6l3-2h5l3 2v14H8z" fill="#fff" stroke="#333" stroke-width="1.2"/><path d="M13 6v14" stroke="#333"/><path d="M5 1v8M1 5h8" stroke="#1f5fbf" stroke-width="2.2"/></svg>
<div class="sep" style="left:1104px"></div>
<svg class="a" style="left:1114px;top:47px" width="20" height="21" viewBox="0 0 20 21"><ellipse cx="13" cy="10" rx="5" ry="8.5" fill="none" stroke="#222" stroke-width="1.6"/><path d="M12 10l-9 9" stroke="#1f5fbf" stroke-width="1.8"/><path d="M1 20.5l1-5 4 4z" fill="#1f5fbf"/></svg>
<svg class="a" style="left:1148px;top:47px" width="20" height="21" viewBox="0 0 20 21"><ellipse cx="10" cy="10.5" rx="8" ry="4.5" fill="none" stroke="#222" stroke-width="1.6"/><path d="M3 3q7-3 14 0M3 18q7 3 14 0" fill="none" stroke="#1f5fbf" stroke-width="1.2"/><path d="M5 1l-3 2 3 2zM15 16l3 2-3 2z" fill="#1f5fbf"/></svg>
<svg class="a" style="left:1182px;top:47px" width="20" height="21" viewBox="0 0 20 21"><ellipse cx="10" cy="7" rx="8" ry="4.5" fill="none" stroke="#222" stroke-width="1.6"/><path d="M4 14v5M8 15v5M12 15v5M16 14v5" stroke="#1f5fbf" stroke-width="1.2"/><path d="M2.5 18h3L4 21zM6.5 19h3L8 21zM10.5 19h3L12 21zM14.5 18h3L16 21z" fill="#1f5fbf"/></svg>
<svg class="a" style="left:1216px;top:47px" width="20" height="21" viewBox="0 0 20 21"><ellipse cx="10" cy="10.5" rx="8" ry="4.5" fill="none" stroke="#222" stroke-width="1.6"/><path d="M1 1l4 4M19 1l-4 4M1 20l4-4M19 20l-4-4" stroke="#1f5fbf" stroke-width="1.2"/><path d="M5 2.5v3h-3zM15 2.5v3h3zM5 18.5v-3h-3zM15 18.5v-3h3z" fill="#1f5fbf"/></svg>
<svg class="a" style="left:1250px;top:47px" width="20" height="21" viewBox="0 0 20 21"><ellipse cx="10" cy="9" rx="8" ry="4.5" fill="none" stroke="#222" stroke-width="1.6"/><path d="M3 1v3M7 1v3M13 1v3M17 1v3" stroke="#1f5fbf" stroke-width="1.1" stroke-dasharray="1.2 1"/><path d="M10 8v10" stroke="#1f5fbf" stroke-width="1.6"/><path d="M7.5 16h5L10 20.5z" fill="#1f5fbf"/></svg>
<div class="a" style="left:1288px;top:43px;width:160px;height:30px;background:#f0f0f0;border-radius:4px"></div>
<div class="t" style="left:1298px;top:51px;font-size:13.4px;color:#333">Search tools...</div>
<div class="a" style="left:1388px;top:49px;width:34px;height:19px;border:1px solid #999;border-radius:2px;background:#f7f7f7"></div>
<div class="t" style="left:1390px;top:53px;font-size:11px;color:#444">alt/⌥</div>
<div class="a" style="left:1422px;top:49px;width:17px;height:19px;border:1px solid #999;border-radius:2px;background:#f7f7f7"></div>
<div class="t" style="left:1427px;top:52px;font-size:11px;color:#444">c</div>

<svg class="a" style="left:14px;top:83px" width="16" height="20" viewBox="0 0 16 20"><g fill="#333"><rect x="2" y="0" width="2" height="2.5"/><rect x="2" y="4" width="2" height="2"/><circle cx="3" cy="9.5" r="3"/><rect x="2" y="13" width="2" height="2"/><rect x="2" y="17" width="2" height="2.5"/></g><path d="M11.5 10v8M7.5 14h8" stroke="#1f5fbf" stroke-width="2"/></svg>
<svg class="a" style="left:10px;top:119px" width="20" height="17" viewBox="0 0 20 17"><ellipse cx="10" cy="6.5" rx="9.5" ry="6" fill="#333"/><path d="M4 10l-3 6.5 8-5z" fill="#333"/></svg>
<svg class="a" style="left:11px;top:154px" width="18" height="18" viewBox="0 0 18 18"><rect x="1" y="1.5" width="13" height="15.5" rx="1.5" fill="none" stroke="#333" stroke-width="1.7"/><path d="M4 5.5h7M4 9h5M4 12.5h3" stroke="#333" stroke-width="1.4"/><path d="M9 14l1-3 6.5-7 2 2-6.5 7z" fill="#333"/></svg>
<svg class="a" style="left:11px;top:188px" width="19" height="19" viewBox="0 0 19 19"><circle cx="11" cy="11" r="6.8" fill="none" stroke="#333" stroke-width="1.8"/><path d="M9 1.5h4M11 1.5v2.5M11 11l2.5-3" stroke="#333" stroke-width="1.8"/><path d="M0.5 8h4M0 11h3.5M1 14h3" stroke="#333" stroke-width="1.3"/></svg>
<svg class="a" style="left:10px;top:223px" width="20" height="20" viewBox="0 0 20 20"><circle cx="9.5" cy="9.5" r="8.5" fill="#333"/><path d="M17 14l3 5-5-2z" fill="#333"/><polygon points="9.5,3.5 14.5,6.5 14.5,12.5 9.5,15.5 4.5,12.5 4.5,6.5" fill="none" stroke="#fff" stroke-width="1.2"/><polygon points="9.5,6.5 12,8 12,11 9.5,12.5 7,11 7,8" fill="none" stroke="#fff" stroke-width="1.1"/></svg>
<div class="a" style="left:0;top:251px;width:39px;height:1px;background:#ddd"></div>
<svg class="a" style="left:11px;top:260px" width="18" height="19" viewBox="0 0 18 19"><rect x="1" y="1" width="16" height="17" rx="2" fill="none" stroke="#333" stroke-width="1.6"/><path d="M3.3 5l1 1 2-2M3.3 9.5l1 1 2-2M3.3 14l1 1 2-2" fill="none" stroke="#333" stroke-width="1.1"/><path d="M8.5 5h6M8.5 9.5h6M8.5 14h6" stroke="#333" stroke-width="1.5"/></svg>
<svg class="a" style="left:10px;top:1058px" width="20" height="16" viewBox="0 0 20 16"><path d="M1 0.5h17v7h-4q-3-3-6.5 0v1.5H1z" fill="#333"/><circle cx="10.5" cy="9" r="3.6" fill="none" stroke="#333" stroke-width="1.8"/><path d="M13 11.5l3.5 3.5" stroke="#333" stroke-width="2"/></svg>

<svg class="a" style="left:50px;top:92px" width="16" height="16" viewBox="0 0 16 16"><path d="M1 1.5h14L9.5 8v7l-3-2V8z" fill="none" stroke="#333" stroke-width="1.3" stroke-linejoin="round"/></svg>
<div class="a" style="left:79px;top:84px;width:122px;height:30px;border:1px solid #c8c8c8;border-radius:4px;background:#fff"></div>
<div class="t" style="left:86px;top:93px;font-size:13px;font-style:italic;color:#888">Filter by name</div>
<svg class="a" style="left:215px;top:92px" width="15" height="15" viewBox="0 0 15 15"><g fill="#222"><rect x="0" y="0.5" width="2" height="2"/><rect x="3.5" y="0.5" width="11.5" height="2"/><rect x="0" y="4.5" width="2" height="2"/><rect x="3.5" y="4.5" width="11.5" height="2"/><rect x="0" y="8.5" width="2" height="2"/><rect x="3.5" y="8.5" width="11.5" height="2"/><rect x="0" y="12.5" width="2" height="2"/><rect x="3.5" y="12.5" width="11.5" height="2"/></g></svg>
<div class="t" style="left:44px;top:125px;font-size:12.6px;font-weight:bold;color:#333">Instances (38)</div>
<svg class="a" style="left:216px;top:122px" width="19" height="16" viewBox="0 0 19 16"><path d="M1 5V1.5h5.5l1.5 2h10v11H6" fill="none" stroke="#333" stroke-width="1.2"/><path d="M1 8v6.5h3" fill="none" stroke="#333" stroke-width="1" stroke-dasharray="1.5 1.2"/><path d="M5 6.5v8M1 10.5h8" stroke="#1f5fbf" stroke-width="2"/></svg>

<svg class="a" style="left:66px;top:153px" width="16" height="16" viewBox="0 0 16 16"><path d="M1.5,8.5 L4.5,6 H6.5 V3 L9.5,0.5 H14.5 V12.5 L11.5,15.5 H1.5 Z" fill="#fff" stroke="#555" stroke-width="1"/><path d="M1.5,8.5 H6.5 V3 H11.5 V15.5 M11.5,3 L14.5,0.5 M6.5,8.5 L9.5,6" fill="none" stroke="#555" stroke-width="0.9"/></svg>
<div class="rt" style="top:154px">Tube 2"x1"x6" &lt;1&gt;</div>
<svg class="a" style="left:66px;top:179px" width="16" height="16" viewBox="0 0 16 16"><path d="M1.5,8.5 L4.5,6 H6.5 V3 L9.5,0.5 H14.5 V12.5 L11.5,15.5 H1.5 Z" fill="#fff" stroke="#555" stroke-width="1"/><path d="M1.5,8.5 H6.5 V3 H11.5 V15.5 M11.5,3 L14.5,0.5 M6.5,8.5 L9.5,6" fill="none" stroke="#555" stroke-width="0.9"/></svg>
<div class="rt" style="top:180px">Tube 2"x1"x6" &lt;2&gt;</div>
<svg class="a" style="left:46px;top:207px" width="8" height="12" viewBox="0 0 8 12"><path d="M1.5 1l5 5-5 5" fill="none" stroke="#555" stroke-width="1.8"/></svg>
<svg class="a" style="left:66px;top:205px" width="16" height="17" viewBox="0 0 16 17"><path d="M1.5,9.5 L4.5,7 H6.5 V4 L9.5,1.5 H14.5 V13.5 L11.5,16.5 H1.5 Z" fill="#fff" stroke="#555" stroke-width="1"/><path d="M1.5,9.5 H6.5 V4 H11.5 V16.5 M11.5,4 L14.5,1.5 M6.5,9.5 L9.5,7" fill="none" stroke="#555" stroke-width="0.9"/><rect x="0.5" y="0.5" width="6.5" height="5.5" fill="#6c94d4" stroke="#3a64b0" stroke-width="0.8"/><path d="M2.7 0.5v5.5M4.8 0.5v5.5M0.5 2.3h6.5M0.5 4.1h6.5" stroke="#fff" stroke-width="0.6"/></svg>
<div class="rt" style="top:206px">1/2" Rou...</div>
<svg class="a" style="left:157px;top:204px" width="6" height="18" viewBox="0 0 6 18"><g fill="#333"><rect x="2" y="0" width="1.8" height="2.2"/><rect x="2" y="3.8" width="1.8" height="2"/><circle cx="2.9" cy="9" r="2.8"/><rect x="2" y="12.2" width="1.8" height="2"/><rect x="2" y="15.8" width="1.8" height="2.2"/></g></svg>
<svg class="a" style="left:66px;top:231px" width="16" height="17" viewBox="0 0 16 17"><path d="M1.5,9.5 L4.5,7 H6.5 V4 L9.5,1.5 H14.5 V13.5 L11.5,16.5 H1.5 Z" fill="#fff" stroke="#555" stroke-width="1"/><path d="M1.5,9.5 H6.5 V4 H11.5 V16.5 M11.5,4 L14.5,1.5 M6.5,9.5 L9.5,7" fill="none" stroke="#555" stroke-width="0.9"/><rect x="0.5" y="0.5" width="6.5" height="5.5" fill="#6c94d4" stroke="#3a64b0" stroke-width="0.8"/><path d="M2.7 0.5v5.5M4.8 0.5v5.5M0.5 2.3h6.5M0.5 4.1h6.5" stroke="#fff" stroke-width="0.6"/></svg>
<div class="rt" style="top:232px">#10 Alu...</div>
<svg class="a" style="left:157px;top:230px" width="6" height="18" viewBox="0 0 6 18"><g fill="#333"><rect x="2" y="0" width="1.8" height="2.2"/><rect x="2" y="3.8" width="1.8" height="2"/><circle cx="2.9" cy="9" r="2.8"/><rect x="2" y="12.2" width="1.8" height="2"/><rect x="2" y="15.8" width="1.8" height="2.2"/></g></svg>
<svg class="a" style="left:66px;top:257px" width="16" height="17" viewBox="0 0 16 17"><path d="M1.5,9.5 L4.5,7 H6.5 V4 L9.5,1.5 H14.5 V13.5 L11.5,16.5 H1.5 Z" fill="#fff" stroke="#555" stroke-width="1"/><path d="M1.5,9.5 H6.5 V4 H11.5 V16.5 M11.5,4 L14.5,1.5 M6.5,9.5 L9.5,7" fill="none" stroke="#555" stroke-width="0.9"/><rect x="0.5" y="0.5" width="6.5" height="5.5" fill="#6c94d4" stroke="#3a64b0" stroke-width="0.8"/><path d="M2.7 0.5v5.5M4.8 0.5v5.5M0.5 2.3h6.5M0.5 4.1h6.5" stroke="#fff" stroke-width="0.6"/></svg>
<div class="rt" style="top:258px">#10 Alu...</div>
<svg class="a" style="left:157px;top:256px" width="6" height="18" viewBox="0 0 6 18"><g fill="#333"><rect x="2" y="0" width="1.8" height="2.2"/><rect x="2" y="3.8" width="1.8" height="2"/><circle cx="2.9" cy="9" r="2.8"/><rect x="2" y="12.2" width="1.8" height="2"/><rect x="2" y="15.8" width="1.8" height="2.2"/></g></svg>
<svg class="a" style="left:66px;top:283px" width="16" height="17" viewBox="0 0 16 17"><path d="M1.5,9.5 L4.5,7 H6.5 V4 L9.5,1.5 H14.5 V13.5 L11.5,16.5 H1.5 Z" fill="#fff" stroke="#555" stroke-width="1"/><path d="M1.5,9.5 H6.5 V4 H11.5 V16.5 M11.5,4 L14.5,1.5 M6.5,9.5 L9.5,7" fill="none" stroke="#555" stroke-width="0.9"/><rect x="0.5" y="0.5" width="6.5" height="5.5" fill="#6c94d4" stroke="#3a64b0" stroke-width="0.8"/><path d="M2.7 0.5v5.5M4.8 0.5v5.5M0.5 2.3h6.5M0.5 4.1h6.5" stroke="#fff" stroke-width="0.6"/></svg>
<div class="rt" style="top:284px">#10 Alu...</div>
<svg class="a" style="left:157px;top:282px" width="6" height="18" viewBox="0 0 6 18"><g fill="#333"><rect x="2" y="0" width="1.8" height="2.2"/><rect x="2" y="3.8" width="1.8" height="2"/><circle cx="2.9" cy="9" r="2.8"/><rect x="2" y="12.2" width="1.8" height="2"/><rect x="2" y="15.8" width="1.8" height="2.2"/></g></svg>
<svg class="a" style="left:66px;top:309px" width="16" height="16" viewBox="0 0 16 16"><path d="M1.5,8.5 L4.5,6 H6.5 V3 L9.5,0.5 H14.5 V12.5 L11.5,15.5 H1.5 Z" fill="#fff" stroke="#555" stroke-width="1"/><path d="M1.5,8.5 H6.5 V3 H11.5 V15.5 M11.5,3 L14.5,0.5 M6.5,8.5 L9.5,6" fill="none" stroke="#555" stroke-width="0.9"/></svg>
<div class="rt" style="top:310px">Gear Swap Top Plate ...</div>
<svg class="a" style="left:46px;top:337px" width="8" height="12" viewBox="0 0 8 12"><path d="M1.5 1l5 5-5 5" fill="none" stroke="#555" stroke-width="1.8"/></svg>
<svg class="a" style="left:65px;top:335px" width="18" height="16" viewBox="0 0 18 16"><path d="M1 9l3-2h10l3 2v5l-2 1.5H1z" fill="#fff" stroke="#555" stroke-width="1"/><path d="M1 9h13.5l2.5-2M14.5 9v6.5M1 11.5h13.5" fill="none" stroke="#555" stroke-width="0.8"/><ellipse cx="6" cy="7.5" rx="2.3" ry="1.3" fill="#fff" stroke="#555" stroke-width="0.9"/><rect x="10" y="3" width="3.5" height="5" fill="#fff" stroke="#555" stroke-width="0.9"/><circle cx="11.8" cy="2.6" r="2.2" fill="#fff" stroke="#555" stroke-width="0.9"/></svg>
<div class="rt" style="top:336px">Replicate 1</div>
<svg class="a" style="left:46px;top:363px" width="8" height="12" viewBox="0 0 8 12"><path d="M1.5 1l5 5-5 5" fill="none" stroke="#555" stroke-width="1.8"/></svg>
<svg class="a" style="left:65px;top:361px" width="18" height="16" viewBox="0 0 18 16"><path d="M1 9l3-2h10l3 2v5l-2 1.5H1z" fill="#fff" stroke="#555" stroke-width="1"/><path d="M1 9h13.5l2.5-2M14.5 9v6.5M1 11.5h13.5" fill="none" stroke="#555" stroke-width="0.8"/><ellipse cx="6" cy="7.5" rx="2.3" ry="1.3" fill="#fff" stroke="#555" stroke-width="0.9"/><rect x="10" y="3" width="3.5" height="5" fill="#fff" stroke="#555" stroke-width="0.9"/><circle cx="11.8" cy="2.6" r="2.2" fill="#fff" stroke="#555" stroke-width="0.9"/></svg>
<div class="rt" style="top:362px">Replicate 2</div>
<svg class="a" style="left:66px;top:387px" width="16" height="16" viewBox="0 0 16 16"><path d="M1.5,8.5 L4.5,6 H6.5 V3 L9.5,0.5 H14.5 V12.5 L11.5,15.5 H1.5 Z" fill="#fff" stroke="#555" stroke-width="1"/><path d="M1.5,8.5 H6.5 V3 H11.5 V15.5 M11.5,3 L14.5,0.5 M6.5,8.5 L9.5,6" fill="none" stroke="#555" stroke-width="0.9"/></svg>
<div class="rt" style="top:388px">Crush Block &lt;2&gt;</div>
<svg class="a" style="left:46px;top:415px" width="8" height="12" viewBox="0 0 8 12"><path d="M1.5 1l5 5-5 5" fill="none" stroke="#555" stroke-width="1.8"/></svg>
<svg class="a" style="left:65px;top:413px" width="18" height="16" viewBox="0 0 18 16"><path d="M1 9l3-2h10l3 2v5l-2 1.5H1z" fill="#fff" stroke="#555" stroke-width="1"/><path d="M1 9h13.5l2.5-2M14.5 9v6.5M1 11.5h13.5" fill="none" stroke="#555" stroke-width="0.8"/><ellipse cx="6" cy="7.5" rx="2.3" ry="1.3" fill="#fff" stroke="#555" stroke-width="0.9"/><rect x="10" y="3" width="3.5" height="5" fill="#fff" stroke="#555" stroke-width="0.9"/><circle cx="11.8" cy="2.6" r="2.2" fill="#fff" stroke="#555" stroke-width="0.9"/></svg>
<div class="rt" style="top:414px">Replicate 3</div>
<div class="row sel" style="top:435px"></div>
<svg class="a" style="left:66px;top:439px" width="16" height="17" viewBox="0 0 16 17"><path d="M1.5,9.5 L4.5,7 H6.5 V4 L9.5,1.5 H14.5 V13.5 L11.5,16.5 H1.5 Z" fill="#fff" stroke="#555" stroke-width="1"/><path d="M1.5,9.5 H6.5 V4 H11.5 V16.5 M11.5,4 L14.5,1.5 M6.5,9.5 L9.5,7" fill="none" stroke="#555" stroke-width="0.9"/><rect x="0.5" y="0.5" width="6.5" height="5.5" fill="#6c94d4" stroke="#3a64b0" stroke-width="0.8"/><path d="M2.7 0.5v5.5M4.8 0.5v5.5M0.5 2.3h6.5M0.5 4.1h6.5" stroke="#fff" stroke-width="0.6"/></svg>
<div class="rt" style="top:440px">Kraken ...</div>
<svg class="a" style="left:151px;top:437px" width="18" height="18" viewBox="0 0 18 18"><circle cx="9" cy="9" r="8" fill="#7fa3c9"/><circle cx="9" cy="9" r="3" fill="#fff"/><rect x="8" y="0.5" width="2" height="1.8" fill="#e8f2fa"/><rect x="8" y="3" width="2" height="1.8" fill="#e8f2fa"/><rect x="8" y="13.2" width="2" height="1.8" fill="#e8f2fa"/><rect x="8" y="15.7" width="2" height="1.8" fill="#e8f2fa"/></svg>
<div class="row sel" style="top:461px"></div>
<svg class="a" style="left:46px;top:467px" width="8" height="12" viewBox="0 0 8 12"><path d="M1.5 1l5 5-5 5" fill="none" stroke="#555" stroke-width="1.8"/></svg>
<svg class="a" style="left:66px;top:465px" width="16" height="17" viewBox="0 0 16 17"><path d="M1.5,9.5 L4.5,7 H6.5 V4 L9.5,1.5 H14.5 V13.5 L11.5,16.5 H1.5 Z" fill="#fff" stroke="#555" stroke-width="1"/><path d="M1.5,9.5 H6.5 V4 H11.5 V16.5 M11.5,4 L14.5,1.5 M6.5,9.5 L9.5,7" fill="none" stroke="#555" stroke-width="0.9"/><rect x="0.5" y="0.5" width="6.5" height="5.5" fill="#6c94d4" stroke="#3a64b0" stroke-width="0.8"/><path d="M2.7 0.5v5.5M4.8 0.5v5.5M0.5 2.3h6.5M0.5 4.1h6.5" stroke="#fff" stroke-width="0.6"/></svg>
<div class="rt" style="top:466px">12t Alu...</div>
<svg class="a" style="left:157px;top:464px" width="6" height="18" viewBox="0 0 6 18"><g fill="#333"><rect x="2" y="0" width="1.8" height="2.2"/><rect x="2" y="3.8" width="1.8" height="2"/><circle cx="2.9" cy="9" r="2.8"/><rect x="2" y="12.2" width="1.8" height="2"/><rect x="2" y="15.8" width="1.8" height="2.2"/></g></svg>
<div class="row sel" style="top:487px"></div>
<svg class="a" style="left:66px;top:491px" width="16" height="17" viewBox="0 0 16 17"><path d="M1.5,9.5 L4.5,7 H6.5 V4 L9.5,1.5 H14.5 V13.5 L11.5,16.5 H1.5 Z" fill="#fff" stroke="#555" stroke-width="1"/><path d="M1.5,9.5 H6.5 V4 H11.5 V16.5 M11.5,4 L14.5,1.5 M6.5,9.5 L9.5,7" fill="none" stroke="#555" stroke-width="0.9"/><rect x="0.5" y="0.5" width="6.5" height="5.5" fill="#6c94d4" stroke="#3a64b0" stroke-width="0.8"/><path d="M2.7 0.5v5.5M4.8 0.5v5.5M0.5 2.3h6.5M0.5 4.1h6.5" stroke="#fff" stroke-width="0.6"/></svg>
<div class="rt" style="top:492px">1/2" Hex...</div>
<svg class="a" style="left:157px;top:490px" width="6" height="18" viewBox="0 0 6 18"><g fill="#333"><rect x="2" y="0" width="1.8" height="2.2"/><rect x="2" y="3.8" width="1.8" height="2"/><circle cx="2.9" cy="9" r="2.8"/><rect x="2" y="12.2" width="1.8" height="2"/><rect x="2" y="15.8" width="1.8" height="2.2"/></g></svg>
<div class="row sel" style="top:513px"></div>
<svg class="a" style="left:66px;top:517px" width="16" height="17" viewBox="0 0 16 17"><path d="M1.5,9.5 L4.5,7 H6.5 V4 L9.5,1.5 H14.5 V13.5 L11.5,16.5 H1.5 Z" fill="#fff" stroke="#555" stroke-width="1"/><path d="M1.5,9.5 H6.5 V4 H11.5 V16.5 M11.5,4 L14.5,1.5 M6.5,9.5 L9.5,7" fill="none" stroke="#555" stroke-width="0.9"/><rect x="0.5" y="0.5" width="6.5" height="5.5" fill="#6c94d4" stroke="#3a64b0" stroke-width="0.8"/><path d="M2.7 0.5v5.5M4.8 0.5v5.5M0.5 2.3h6.5M0.5 4.1h6.5" stroke="#fff" stroke-width="0.6"/></svg>
<div class="rt" style="top:518px">1/2" Hex...</div>
<svg class="a" style="left:157px;top:516px" width="6" height="18" viewBox="0 0 6 18"><g fill="#333"><rect x="2" y="0" width="1.8" height="2.2"/><rect x="2" y="3.8" width="1.8" height="2"/><circle cx="2.9" cy="9" r="2.8"/><rect x="2" y="12.2" width="1.8" height="2"/><rect x="2" y="15.8" width="1.8" height="2.2"/></g></svg>
<div class="row sel" style="top:539px"></div>
<svg class="a" style="left:66px;top:543px" width="16" height="17" viewBox="0 0 16 17"><path d="M1.5,9.5 L4.5,7 H6.5 V4 L9.5,1.5 H14.5 V13.5 L11.5,16.5 H1.5 Z" fill="#fff" stroke="#555" stroke-width="1"/><path d="M1.5,9.5 H6.5 V4 H11.5 V16.5 M11.5,4 L14.5,1.5 M6.5,9.5 L9.5,7" fill="none" stroke="#555" stroke-width="0.9"/><rect x="0.5" y="0.5" width="6.5" height="5.5" fill="#6c94d4" stroke="#3a64b0" stroke-width="0.8"/><path d="M2.7 0.5v5.5M4.8 0.5v5.5M0.5 2.3h6.5M0.5 4.1h6.5" stroke="#fff" stroke-width="0.6"/></svg>
<div class="rt" style="top:544px">3D-Print...</div>
<svg class="a" style="left:157px;top:542px" width="6" height="18" viewBox="0 0 6 18"><g fill="#333"><rect x="2" y="0" width="1.8" height="2.2"/><rect x="2" y="3.8" width="1.8" height="2"/><circle cx="2.9" cy="9" r="2.8"/><rect x="2" y="12.2" width="1.8" height="2"/><rect x="2" y="15.8" width="1.8" height="2.2"/></g></svg>
<div class="row sel" style="top:565px"></div>
<svg class="a" style="left:46px;top:571px" width="8" height="12" viewBox="0 0 8 12"><path d="M1.5 1l5 5-5 5" fill="none" stroke="#555" stroke-width="1.8"/></svg>
<svg class="a" style="left:66px;top:569px" width="16" height="17" viewBox="0 0 16 17"><path d="M1.5,9.5 L4.5,7 H6.5 V4 L9.5,1.5 H14.5 V13.5 L11.5,16.5 H1.5 Z" fill="#fff" stroke="#555" stroke-width="1"/><path d="M1.5,9.5 H6.5 V4 H11.5 V16.5 M11.5,4 L14.5,1.5 M6.5,9.5 L9.5,7" fill="none" stroke="#555" stroke-width="0.9"/><rect x="0.5" y="0.5" width="6.5" height="5.5" fill="#6c94d4" stroke="#3a64b0" stroke-width="0.8"/><path d="M2.7 0.5v5.5M4.8 0.5v5.5M0.5 2.3h6.5M0.5 4.1h6.5" stroke="#fff" stroke-width="0.6"/></svg>
<div class="rt" style="top:570px">48t Cust...</div>
<svg class="a" style="left:157px;top:568px" width="6" height="18" viewBox="0 0 6 18"><g fill="#333"><rect x="2" y="0" width="1.8" height="2.2"/><rect x="2" y="3.8" width="1.8" height="2"/><circle cx="2.9" cy="9" r="2.8"/><rect x="2" y="12.2" width="1.8" height="2"/><rect x="2" y="15.8" width="1.8" height="2.2"/></g></svg>
<div class="row sel" style="top:591px"></div>
<svg class="a" style="left:66px;top:595px" width="16" height="17" viewBox="0 0 16 17"><path d="M1.5,9.5 L4.5,7 H6.5 V4 L9.5,1.5 H14.5 V13.5 L11.5,16.5 H1.5 Z" fill="#fff" stroke="#555" stroke-width="1"/><path d="M1.5,9.5 H6.5 V4 H11.5 V16.5 M11.5,4 L14.5,1.5 M6.5,9.5 L9.5,7" fill="none" stroke="#555" stroke-width="0.9"/><rect x="0.5" y="0.5" width="6.5" height="5.5" fill="#6c94d4" stroke="#3a64b0" stroke-width="0.8"/><path d="M2.7 0.5v5.5M4.8 0.5v5.5M0.5 2.3h6.5M0.5 4.1h6.5" stroke="#fff" stroke-width="0.6"/></svg>
<div class="rt" style="top:596px">1/2" Hex...</div>
<svg class="a" style="left:157px;top:594px" width="6" height="18" viewBox="0 0 6 18"><g fill="#333"><rect x="2" y="0" width="1.8" height="2.2"/><rect x="2" y="3.8" width="1.8" height="2"/><circle cx="2.9" cy="9" r="2.8"/><rect x="2" y="12.2" width="1.8" height="2"/><rect x="2" y="15.8" width="1.8" height="2.2"/></g></svg>
<div class="row sel" style="top:617px"></div>
<svg class="a" style="left:66px;top:621px" width="16" height="17" viewBox="0 0 16 17"><path d="M1.5,9.5 L4.5,7 H6.5 V4 L9.5,1.5 H14.5 V13.5 L11.5,16.5 H1.5 Z" fill="#fff" stroke="#555" stroke-width="1"/><path d="M1.5,9.5 H6.5 V4 H11.5 V16.5 M11.5,4 L14.5,1.5 M6.5,9.5 L9.5,7" fill="none" stroke="#555" stroke-width="0.9"/><rect x="0.5" y="0.5" width="6.5" height="5.5" fill="#6c94d4" stroke="#3a64b0" stroke-width="0.8"/><path d="M2.7 0.5v5.5M4.8 0.5v5.5M0.5 2.3h6.5M0.5 4.1h6.5" stroke="#fff" stroke-width="0.6"/></svg>
<div class="rt" style="top:622px">1/2" Hex...</div>
<svg class="a" style="left:157px;top:620px" width="6" height="18" viewBox="0 0 6 18"><g fill="#333"><rect x="2" y="0" width="1.8" height="2.2"/><rect x="2" y="3.8" width="1.8" height="2"/><circle cx="2.9" cy="9" r="2.8"/><rect x="2" y="12.2" width="1.8" height="2"/><rect x="2" y="15.8" width="1.8" height="2.2"/></g></svg>
<div class="row sel" style="top:643px"></div>
<svg class="a" style="left:66px;top:647px" width="16" height="17" viewBox="0 0 16 17"><path d="M1.5,9.5 L4.5,7 H6.5 V4 L9.5,1.5 H14.5 V13.5 L11.5,16.5 H1.5 Z" fill="#fff" stroke="#555" stroke-width="1"/><path d="M1.5,9.5 H6.5 V4 H11.5 V16.5 M11.5,4 L14.5,1.5 M6.5,9.5 L9.5,7" fill="none" stroke="#555" stroke-width="0.9"/><rect x="0.5" y="0.5" width="6.5" height="5.5" fill="#6c94d4" stroke="#3a64b0" stroke-width="0.8"/><path d="M2.7 0.5v5.5M4.8 0.5v5.5M0.5 2.3h6.5M0.5 4.1h6.5" stroke="#fff" stroke-width="0.6"/></svg>
<div class="rt" style="top:648px">30t Alu...</div>
<svg class="a" style="left:157px;top:646px" width="6" height="18" viewBox="0 0 6 18"><g fill="#333"><rect x="2" y="0" width="1.8" height="2.2"/><rect x="2" y="3.8" width="1.8" height="2"/><circle cx="2.9" cy="9" r="2.8"/><rect x="2" y="12.2" width="1.8" height="2"/><rect x="2" y="15.8" width="1.8" height="2.2"/></g></svg>
<div class="row sel" style="top:669px"></div>
<svg class="a" style="left:66px;top:673px" width="16" height="17" viewBox="0 0 16 17"><path d="M1.5,9.5 L4.5,7 H6.5 V4 L9.5,1.5 H14.5 V13.5 L11.5,16.5 H1.5 Z" fill="#fff" stroke="#555" stroke-width="1"/><path d="M1.5,9.5 H6.5 V4 H11.5 V16.5 M11.5,4 L14.5,1.5 M6.5,9.5 L9.5,7" fill="none" stroke="#555" stroke-width="0.9"/><rect x="0.5" y="0.5" width="6.5" height="5.5" fill="#6c94d4" stroke="#3a64b0" stroke-width="0.8"/><path d="M2.7 0.5v5.5M4.8 0.5v5.5M0.5 2.3h6.5M0.5 4.1h6.5" stroke="#fff" stroke-width="0.6"/></svg>
<div class="rt" style="top:674px">30t Alu...</div>
<svg class="a" style="left:157px;top:672px" width="6" height="18" viewBox="0 0 6 18"><g fill="#333"><rect x="2" y="0" width="1.8" height="2.2"/><rect x="2" y="3.8" width="1.8" height="2"/><circle cx="2.9" cy="9" r="2.8"/><rect x="2" y="12.2" width="1.8" height="2"/><rect x="2" y="15.8" width="1.8" height="2.2"/></g></svg>
<div class="row sel" style="top:695px"></div>
<svg class="a" style="left:66px;top:699px" width="16" height="17" viewBox="0 0 16 17"><path d="M1.5,9.5 L4.5,7 H6.5 V4 L9.5,1.5 H14.5 V13.5 L11.5,16.5 H1.5 Z" fill="#fff" stroke="#555" stroke-width="1"/><path d="M1.5,9.5 H6.5 V4 H11.5 V16.5 M11.5,4 L14.5,1.5 M6.5,9.5 L9.5,7" fill="none" stroke="#555" stroke-width="0.9"/><rect x="0.5" y="0.5" width="6.5" height="5.5" fill="#6c94d4" stroke="#3a64b0" stroke-width="0.8"/><path d="M2.7 0.5v5.5M4.8 0.5v5.5M0.5 2.3h6.5M0.5 4.1h6.5" stroke="#fff" stroke-width="0.6"/></svg>
<div class="rt" style="top:700px">1/2" Hex...</div>
<svg class="a" style="left:157px;top:698px" width="6" height="18" viewBox="0 0 6 18"><g fill="#333"><rect x="2" y="0" width="1.8" height="2.2"/><rect x="2" y="3.8" width="1.8" height="2"/><circle cx="2.9" cy="9" r="2.8"/><rect x="2" y="12.2" width="1.8" height="2"/><rect x="2" y="15.8" width="1.8" height="2.2"/></g></svg>
<div class="row sel" style="top:721px"></div>
<svg class="a" style="left:66px;top:725px" width="16" height="17" viewBox="0 0 16 17"><path d="M1.5,9.5 L4.5,7 H6.5 V4 L9.5,1.5 H14.5 V13.5 L11.5,16.5 H1.5 Z" fill="#fff" stroke="#555" stroke-width="1"/><path d="M1.5,9.5 H6.5 V4 H11.5 V16.5 M11.5,4 L14.5,1.5 M6.5,9.5 L9.5,7" fill="none" stroke="#555" stroke-width="0.9"/><rect x="0.5" y="0.5" width="6.5" height="5.5" fill="#6c94d4" stroke="#3a64b0" stroke-width="0.8"/><path d="M2.7 0.5v5.5M4.8 0.5v5.5M0.5 2.3h6.5M0.5 4.1h6.5" stroke="#fff" stroke-width="0.6"/></svg>
<div class="rt" style="top:726px">1/2" Hex...</div>
<svg class="a" style="left:157px;top:724px" width="6" height="18" viewBox="0 0 6 18"><g fill="#333"><rect x="2" y="0" width="1.8" height="2.2"/><rect x="2" y="3.8" width="1.8" height="2"/><circle cx="2.9" cy="9" r="2.8"/><rect x="2" y="12.2" width="1.8" height="2"/><rect x="2" y="15.8" width="1.8" height="2.2"/></g></svg>
<div class="row sel" style="top:747px"></div>
<svg class="a" style="left:66px;top:751px" width="16" height="17" viewBox="0 0 16 17"><path d="M1.5,9.5 L4.5,7 H6.5 V4 L9.5,1.5 H14.5 V13.5 L11.5,16.5 H1.5 Z" fill="#fff" stroke="#555" stroke-width="1"/><path d="M1.5,9.5 H6.5 V4 H11.5 V16.5 M11.5,4 L14.5,1.5 M6.5,9.5 L9.5,7" fill="none" stroke="#555" stroke-width="0.9"/><rect x="0.5" y="0.5" width="6.5" height="5.5" fill="#6c94d4" stroke="#3a64b0" stroke-width="0.8"/><path d="M2.7 0.5v5.5M4.8 0.5v5.5M0.5 2.3h6.5M0.5 4.1h6.5" stroke="#fff" stroke-width="0.6"/></svg>
<div class="rt" style="top:752px">1/2" Hex...</div>
<svg class="a" style="left:157px;top:750px" width="6" height="18" viewBox="0 0 6 18"><g fill="#333"><rect x="2" y="0" width="1.8" height="2.2"/><rect x="2" y="3.8" width="1.8" height="2"/><circle cx="2.9" cy="9" r="2.8"/><rect x="2" y="12.2" width="1.8" height="2"/><rect x="2" y="15.8" width="1.8" height="2.2"/></g></svg>
<div class="row sel" style="top:773px"></div>
<svg class="a" style="left:66px;top:777px" width="16" height="17" viewBox="0 0 16 17"><path d="M1.5,9.5 L4.5,7 H6.5 V4 L9.5,1.5 H14.5 V13.5 L11.5,16.5 H1.5 Z" fill="#fff" stroke="#555" stroke-width="1"/><path d="M1.5,9.5 H6.5 V4 H11.5 V16.5 M11.5,4 L14.5,1.5 M6.5,9.5 L9.5,7" fill="none" stroke="#555" stroke-width="0.9"/><rect x="0.5" y="0.5" width="6.5" height="5.5" fill="#6c94d4" stroke="#3a64b0" stroke-width="0.8"/><path d="M2.7 0.5v5.5M4.8 0.5v5.5M0.5 2.3h6.5M0.5 4.1h6.5" stroke="#fff" stroke-width="0.6"/></svg>
<div class="rt" style="top:778px">1/2" Hex...</div>
<svg class="a" style="left:157px;top:776px" width="6" height="18" viewBox="0 0 6 18"><g fill="#333"><rect x="2" y="0" width="1.8" height="2.2"/><rect x="2" y="3.8" width="1.8" height="2"/><circle cx="2.9" cy="9" r="2.8"/><rect x="2" y="12.2" width="1.8" height="2"/><rect x="2" y="15.8" width="1.8" height="2.2"/></g></svg>
<div class="row sel" style="top:799px"></div>
<svg class="a" style="left:66px;top:803px" width="16" height="17" viewBox="0 0 16 17"><path d="M1.5,9.5 L4.5,7 H6.5 V4 L9.5,1.5 H14.5 V13.5 L11.5,16.5 H1.5 Z" fill="#fff" stroke="#555" stroke-width="1"/><path d="M1.5,9.5 H6.5 V4 H11.5 V16.5 M11.5,4 L14.5,1.5 M6.5,9.5 L9.5,7" fill="none" stroke="#555" stroke-width="0.9"/><rect x="0.5" y="0.5" width="6.5" height="5.5" fill="#6c94d4" stroke="#3a64b0" stroke-width="0.8"/><path d="M2.7 0.5v5.5M4.8 0.5v5.5M0.5 2.3h6.5M0.5 4.1h6.5" stroke="#fff" stroke-width="0.6"/></svg>
<div class="rt" style="top:804px">1/2" Hex...</div>
<svg class="a" style="left:157px;top:802px" width="6" height="18" viewBox="0 0 6 18"><g fill="#333"><rect x="2" y="0" width="1.8" height="2.2"/><rect x="2" y="3.8" width="1.8" height="2"/><circle cx="2.9" cy="9" r="2.8"/><rect x="2" y="12.2" width="1.8" height="2"/><rect x="2" y="15.8" width="1.8" height="2.2"/></g></svg>
<div class="a" style="left:235px;top:344px;width:2px;height:441px;background:#6e6e6e"></div>
<svg class="a" style="left:44px;top:833px" width="12" height="8" viewBox="0 0 12 8"><path d="M1 1.5l5 5 5-5" fill="none" stroke="#555" stroke-width="1.8"/></svg>
<div class="t" style="left:63px;top:830px;font-size:13px;color:#333">Items (0)</div>
<svg class="a" style="left:44px;top:859px" width="12" height="8" viewBox="0 0 12 8"><path d="M1 1.5l5 5 5-5" fill="none" stroke="#555" stroke-width="1.8"/></svg>
<div class="t" style="left:63px;top:856px;font-size:13px;color:#333">Loads (0)</div>
<svg class="a" style="left:44px;top:885px" width="12" height="8" viewBox="0 0 12 8"><path d="M1 1.5l5 5 5-5" fill="none" stroke="#555" stroke-width="1.8"/></svg>
<div class="t" style="left:63px;top:882px;font-size:13px;color:#333">Mate Features (24)</div>
<div class="a" style="left:49px;top:902px;width:1px;height:147px;background:#d5d5d5"></div>
<svg class="a" style="left:85px;top:907px" width="15" height="15" viewBox="0 0 15 15"><rect x="0.5" y="0.5" width="14" height="14" fill="none" stroke="#aaa" stroke-width="1" stroke-dasharray="2 2"/><rect x="3.5" y="3.5" width="5" height="5" fill="#fff" stroke="#aaa"/><rect x="6" y="6" width="5" height="5" fill="none" stroke="#aaa"/></svg>
<div class="t" style="left:105px;top:908px;font-size:13px;color:#999">Group 1</div>
<svg class="a" style="left:65px;top:935px" width="8" height="12" viewBox="0 0 8 12"><path d="M1.5 1l5 5-5 5" fill="none" stroke="#666" stroke-width="1.8"/></svg>
<svg class="a" style="left:86px;top:932px" width="13" height="17" viewBox="0 0 13 17"><path d="M6.5 16.5Q1 9 1 6.5a5.5 5.5 0 0 1 11 0Q12 9 6.5 16.5z" fill="none" stroke="#aaa" stroke-width="1.1"/><circle cx="6.5" cy="6.5" r="2.5" fill="none" stroke="#aaa" stroke-width="1.1"/><circle cx="6.5" cy="6.5" r="1" fill="#aaa"/></svg>
<div class="t" style="left:105px;top:934px;font-size:13px;color:#999">Fastened 1</div>
<svg class="a" style="left:65px;top:961px" width="8" height="12" viewBox="0 0 8 12"><path d="M1.5 1l5 5-5 5" fill="none" stroke="#666" stroke-width="1.8"/></svg>
<svg class="a" style="left:86px;top:959px" width="13" height="16" viewBox="0 0 13 16"><path d="M0.5 3.5v9q6 5 12 0v-9" fill="#c8c8c8" stroke="#bbb"/><ellipse cx="6.5" cy="3.5" rx="6" ry="2.8" fill="#eee" stroke="#bbb"/><path d="M3 7v3.5q3.5 2 7 0V7" fill="#eee" stroke="#bbb" stroke-width="0.8"/></svg>
<div class="t" style="left:105px;top:960px;font-size:13px;color:#999">Fastened 2</div>
<svg class="a" style="left:65px;top:987px" width="8" height="12" viewBox="0 0 8 12"><path d="M1.5 1l5 5-5 5" fill="none" stroke="#666" stroke-width="1.8"/></svg>
<svg class="a" style="left:86px;top:985px" width="13" height="16" viewBox="0 0 13 16"><path d="M0.5 3.5v9q6 5 12 0v-9" fill="#c8c8c8" stroke="#bbb"/><ellipse cx="6.5" cy="3.5" rx="6" ry="2.8" fill="#eee" stroke="#bbb"/><path d="M3 7v3.5q3.5 2 7 0V7" fill="#eee" stroke="#bbb" stroke-width="0.8"/></svg>
<div class="t" style="left:105px;top:986px;font-size:13px;color:#999">Fastened 3</div>
<svg class="a" style="left:65px;top:1013px" width="8" height="12" viewBox="0 0 8 12"><path d="M1.5 1l5 5-5 5" fill="none" stroke="#666" stroke-width="1.8"/></svg>
<svg class="a" style="left:86px;top:1011px" width="13" height="16" viewBox="0 0 13 16"><path d="M0.5 3.5v9q6 5 12 0v-9" fill="#c8c8c8" stroke="#bbb"/><ellipse cx="6.5" cy="3.5" rx="6" ry="2.8" fill="#eee" stroke="#bbb"/><path d="M3 7v3.5q3.5 2 7 0V7" fill="#eee" stroke="#bbb" stroke-width="0.8"/></svg>
<div class="t" style="left:105px;top:1012px;font-size:13px;color:#999">Fastened 4</div>
<svg class="a" style="left:65px;top:1039px" width="8" height="12" viewBox="0 0 8 12"><path d="M1.5 1l5 5-5 5" fill="none" stroke="#666" stroke-width="1.8"/></svg>
<svg class="a" style="left:86px;top:1037px" width="13" height="16" viewBox="0 0 13 16"><path d="M0.5 3.5v9q6 5 12 0v-9" fill="#c8c8c8" stroke="#bbb"/><ellipse cx="6.5" cy="3.5" rx="6" ry="2.8" fill="#eee" stroke="#bbb"/><path d="M3 7v3.5q3.5 2 7 0V7" fill="#eee" stroke="#bbb" stroke-width="0.8"/></svg>
<div class="t" style="left:105px;top:1038px;font-size:13px;color:#999">Fastened 5</div>
<div class="a" style="left:245px;top:538px;width:33px;height:34px;background:#fff;border:1px solid #cfcfcf;border-left:none"></div>
<svg class="a" style="left:253px;top:546px" width="18" height="18" viewBox="0 0 18 18"><path d="M1 1.5l2 2 2-2" fill="none" stroke="#444" stroke-width="1.1"/><path d="M3 4v13M6 4h11M6 8.5h11M6 13h11M3 17h14" stroke="#444" stroke-width="1.3"/></svg>
<!-- BOTTOM TABS -->
<div class="a" style="left:40px;top:1050px;width:33px;height:29px;background:#cdcdcd"></div>
<svg class="a" style="left:49px;top:1058px" width="15" height="15" viewBox="0 0 15 15"><path d="M7.5 0v15M0 7.5h15" stroke="#555" stroke-width="2.4"/></svg>
<svg class="a" style="left:73px;top:1050px" width="175" height="29" viewBox="0 0 175 29"><path d="M1 0h39l7 14.5L40 29H1z" fill="#e9e9e9"/><path d="M43 0h127l5 14.5-5 14.5H43l7-14.5z" fill="#e9e9e9"/></svg>
<svg class="a" style="left:83px;top:1054px" width="19" height="18" viewBox="0 0 19 18"><path d="M9.5 0.5L0.5 9h2.5v8.5h4.5v-5h4v5h4.5V9h2.5z" fill="#444"/><rect x="13.5" y="1.5" width="2.5" height="5" fill="#444"/></svg>
<div class="t" style="left:130px;top:1056px;font-size:14px;color:#444">Exercise 8 - Ind</div>
<div class="a" style="left:248px;top:1050px;width:199px;height:27px;background:#e6e6e6;border-radius:0 0 3px 3px"></div>
<svg class="a" style="left:260px;top:1056px" width="14" height="14" viewBox="0 0 14 14"><circle cx="7" cy="7" r="6.5" fill="#5b8fd0"/><rect x="6" y="2.5" width="2" height="5" fill="#fff"/><circle cx="7" cy="10" r="1.3" fill="#fff"/></svg>
<svg class="a" style="left:278px;top:1054px" width="17" height="18" viewBox="0 0 17 18"><path d="M1 4l4-3h11v13l-4 3H1z" fill="#aaa" stroke="#444" stroke-width="1.1"/><path d="M1 4h11v13M12 4l4-3" fill="none" stroke="#444"/><path d="M1.5 4.5h10v12h-10z" fill="#777"/></svg>
<div class="t" style="left:300px;top:1056px;font-size:14px;color:#444">Exercise 8 Assembly</div>
<div class="a" style="left:449px;top:1050px;width:199px;height:28px;background:#f6f6f6;border-bottom:2px solid #1f5fbf;border-radius:0 0 3px 3px"></div>
<svg class="a" style="left:461px;top:1056px" width="14" height="14" viewBox="0 0 14 14"><circle cx="7" cy="7" r="6.5" fill="#5b8fd0"/><rect x="6" y="2.5" width="2" height="5" fill="#fff"/><circle cx="7" cy="10" r="1.3" fill="#fff"/></svg>
<svg class="a" style="left:480px;top:1054px" width="17" height="18" viewBox="0 0 17 18"><path d="M1 4l4-3h11v13l-4 3H1z" fill="#aaa" stroke="#444" stroke-width="1.1"/><path d="M1 4h11v13M12 4l4-3" fill="none" stroke="#444"/><path d="M1.5 4.5h10v12h-10z" fill="#777"/></svg>
<div class="t" style="left:502px;top:1056px;font-size:14px;color:#333">Assembly 1</div>
<div class="a" style="left:651px;top:1050px;width:199px;height:27px;background:#e6e6e6;border-radius:0 0 3px 3px"></div>
<svg class="a" style="left:662px;top:1054px" width="17" height="18" viewBox="0 0 17 18"><path d="M1 7l3-2h3v12H1z M7 4l3-3h3l3 2v14H7z" fill="#fff" stroke="#444" stroke-width="1.1"/><path d="M4 5v12M13 1v16" stroke="#444"/></svg>
<div class="t" style="left:684px;top:1056px;font-size:13.7px;color:#444">Exercise 8 Part Studio</div>
<!-- measure tools -->
<svg class="a" style="left:1821px;top:1029px" width="18" height="14" viewBox="0 0 18 14"><ellipse cx="12" cy="5" rx="5" ry="3.5" fill="none" stroke="#333" stroke-width="1.3"/><circle cx="12" cy="5" r="1.2" fill="#333"/><path d="M1 9h16v4H1z" fill="none" stroke="#333" stroke-width="1.2"/><path d="M4 9v2M7 9v2M10 9v2M13 9v2" stroke="#333" stroke-width="0.8"/></svg>
<svg class="a" style="left:1856px;top:1028px" width="19" height="15" viewBox="0 0 19 15"><path d="M1 13.5a8.5 8.5 0 0 1 17 0z" fill="none" stroke="#333" stroke-width="1.4"/><path d="M5 13a4.5 4.5 0 0 1 9 0" fill="none" stroke="#333" stroke-width="2.2"/><path d="M2 9l2 1M9.5 3v2M17 9l-2 1" stroke="#333"/></svg>
<svg class="a" style="left:1891px;top:1027px" width="18" height="16" viewBox="0 0 18 16"><path d="M9 1v13M4 14.5h10M2 3h14" stroke="#333" stroke-width="1.4"/><path d="M0.5 9L3 3l2.5 6zM12.5 9L15 3l2.5 6z" fill="none" stroke="#333" stroke-width="1"/><path d="M0.5 9h5M12.5 9h5" stroke="#333" stroke-width="1.4"/></svg>
<!-- right side panel -->
<div class="a" style="left:1888px;top:367px;width:31px;height:199px;border:1px solid #cfcfcf;border-right:none;background:#fff"></div>
<div class="a" style="left:1888px;top:400px;width:31px;height:1px;background:#ddd"></div>
<div class="a" style="left:1888px;top:433px;width:31px;height:1px;background:#ddd"></div>
<div class="a" style="left:1888px;top:467px;width:31px;height:1px;background:#ddd"></div>
<div class="a" style="left:1888px;top:500px;width:31px;height:1px;background:#ddd"></div>
<div class="a" style="left:1888px;top:533px;width:31px;height:1px;background:#ddd"></div>
<div class="a" style="left:1888px;top:576px;width:31px;height:166px;border:1px solid #cfcfcf;border-right:none;background:#fff"></div>
<div class="a" style="left:1888px;top:609px;width:31px;height:1px;background:#ddd"></div>
<div class="a" style="left:1888px;top:642px;width:31px;height:1px;background:#ddd"></div>
<div class="a" style="left:1888px;top:675px;width:31px;height:1px;background:#ddd"></div>
<div class="a" style="left:1888px;top:708px;width:31px;height:1px;background:#ddd"></div>
<svg class="a" style="left:1896px;top:376px" width="17" height="17" viewBox="0 0 17 17"><rect x="1" y="1" width="15" height="15" rx="3" fill="none" stroke="#333" stroke-width="1.4"/><path d="M4 5h9M5 8h8M5 11h8M4 5v7" stroke="#333" stroke-width="1.1"/></svg>
<svg class="a" style="left:1895px;top:408px" width="19" height="18" viewBox="0 0 19 18"><path d="M5 8l6-3 6 3v7l-6 3-6-3z" fill="#fff" stroke="#333" stroke-width="1.1"/><path d="M5 8l6 3 6-3M11 11v7" fill="none" stroke="#333"/><rect x="1" y="1" width="7" height="6" fill="#6c94d4"/><path d="M3.3 1v6M5.6 1v6M1 3h7M1 5h7" stroke="#fff" stroke-width="0.6"/></svg>
<svg class="a" style="left:1896px;top:442px" width="18" height="17" viewBox="0 0 18 17"><rect x="1" y="1" width="4" height="4" fill="none" stroke="#555"/><path d="M3 5v4h5" fill="none" stroke="#555" stroke-dasharray="1.5 1"/><path d="M8 9l2-2h2V5l2-1h3v11l-2 1H8z" fill="#fff" stroke="#333" stroke-width="1.1"/></svg>
<svg class="a" style="left:1895px;top:475px" width="19" height="18" viewBox="0 0 19 18"><rect x="10" y="1" width="6" height="10" fill="none" stroke="#333" stroke-dasharray="1.6 1.2"/><rect x="1" y="11" width="17" height="6" fill="#fff" stroke="#333" stroke-width="1.1"/><circle cx="14" cy="14" r="2" fill="none" stroke="#333"/></svg>
<svg class="a" style="left:1896px;top:508px" width="17" height="18" viewBox="0 0 17 18"><polygon points="8.5,1 16,5 16,13 8.5,17 1,13 1,5" fill="#4a7fc8"/><path d="M8.5 1v16M1 5l15 8M16 5L1 13" stroke="#fff" stroke-width="1"/><polygon points="8.5,1 16,5 8.5,9" fill="#9cc4ea"/><polygon points="1,13 8.5,17 8.5,9" fill="#2a5a9e"/></svg>
<svg class="a" style="left:1894px;top:540px" width="21" height="19" viewBox="0 0 21 19"><rect x="1" y="1" width="7" height="7" fill="none" stroke="#333"/><path d="M3.3 1v7M5.6 1v7M1 3.3h7M1 5.6h7" stroke="#333" stroke-width="0.7"/><path d="M4 9q-3 4 0 9M19 9q3 4 0 9" fill="none" stroke="#333" stroke-width="1.6"/><path d="M8 11l7 7M15 11l-7 7" stroke="#333" stroke-width="2"/></svg>
<svg class="a" style="left:1893px;top:582px" width="22" height="21" viewBox="0 0 22 21"><rect x="0.5" y="0.5" width="21" height="20" rx="2" fill="#ddd"/><rect x="2" y="2" width="18" height="17" fill="#1f5fbf" stroke="#173f80"/><text x="11" y="15" font-family="Liberation Serif" font-size="10.5" font-weight="bold" fill="#fff" text-anchor="middle">MK</text></svg>
<svg class="a" style="left:1893px;top:615px" width="22" height="21" viewBox="0 0 22 21"><rect x="0.5" y="0.5" width="21" height="20" rx="2" fill="#ddd"/><path d="M11 9Q8 2 2 3q0 7 5 8-3 1-3 4t3 2q3-2 4-6 1 4 4 6t3-2-3-4q5-1 5-8-6-1-9 6z" fill="#111"/></svg>
<svg class="a" style="left:1893px;top:648px" width="22" height="21" viewBox="0 0 22 21"><rect x="0.5" y="0.5" width="21" height="20" rx="2" fill="#ddd"/><rect x="3" y="6" width="16" height="11" rx="3" fill="#333"/><circle cx="8" cy="11" r="2.2" fill="#fff"/><circle cx="14" cy="11" r="2.2" fill="#fff"/><circle cx="8" cy="11" r="1" fill="#333"/><circle cx="14" cy="11" r="1" fill="#333"/><path d="M11 6V2M8 3h6" stroke="#555" stroke-width="1.2"/></svg>
<svg class="a" style="left:1893px;top:681px" width="22" height="21" viewBox="0 0 22 21"><rect x="0.5" y="0.5" width="21" height="20" rx="2" fill="#5cb85c"/><path d="M4 5q4-1 6.5 1v10q-2.5-2-6.5-1zM17.5 5q-4-1-6.5 1v10q2.5-2 6.5-1z" fill="#fff"/></svg>
<svg class="a" style="left:1893px;top:714px" width="22" height="21" viewBox="0 0 22 21"><rect x="0.5" y="0.5" width="21" height="20" rx="2" fill="#ddd"/><rect x="2" y="2" width="18" height="17" fill="#1f5fbf" stroke="#173f80"/><path d="M4.5 5q3.5-1 6 1v10q-2.5-2-6-1zM17.5 5q-3.5-1-6 1v10q2.5-2 6-1z" fill="#fff"/></svg>
<!-- view cube -->
<svg class="a" style="left:1750px;top:85px" width="165" height="165" viewBox="1750 85 165 165">
<path d="M1822.5 101h15l-7.5-10z" fill="#8e8e8e"/>
<path d="M1822.5 231h15l-7.5 10z" fill="#8e8e8e"/>
<path d="M1765 158v15l-10-7.5z" fill="#8e8e8e"/>
<path d="M1895 158v15l10-7.5z" fill="#8e8e8e"/>
<path d="M1809 103q-16 4-26 15" fill="none" stroke="#8e8e8e" stroke-width="4.5"/>
<path d="M1776 125l2-14 9 8z" fill="#8e8e8e"/>
<path d="M1851 103q16 4 26 15" fill="none" stroke="#8e8e8e" stroke-width="4.5"/>
<path d="M1884 125l-2-14-9 8z" fill="#8e8e8e"/>
<g>
<path d="M1793,143 Q1800,130 1822,124.5 Q1845,128 1857,133.5 Q1868,140 1868,150 L1868,180 Q1866,188 1861.5,191 L1840,207 Q1830,210 1817,203 L1796,193 Q1792,190 1793,185 Z" fill="#e1e4e5"/>
<path d="M1806,141 Q1810,134 1823.6,129 L1853,136 Q1858,139 1853,143 L1841,152 Q1835,154 1828,152 L1808,146 Q1803,144 1806,141 Z" fill="#fdfdfd"/>
<path d="M1797,160 Q1797,157 1801,158 L1826,166 Q1830,168 1830,172 L1831,197 Q1830,202 1826,200 L1801,193 Q1797,192 1797,188 Z" fill="#fdfdfd"/>
<path d="M1846,158 L1863,149 Q1867,148 1867,152 L1865.5,183 Q1865,186 1862,188 L1848,196 Q1845,197 1845,193 L1845,162 Q1845,159 1846,158 Z" fill="#fdfdfd"/>
<circle cx="1838.4" cy="161.3" r="6" fill="#fdfdfd"/>
<ellipse cx="1797.6" cy="149" rx="2.5" ry="4" fill="#fdfdfd"/>
</g>
<text x="1830" y="143" font-family="Liberation Sans" font-size="9" font-style="italic" fill="#333" transform="rotate(24 1830 140)" text-anchor="middle">Top</text>
<text x="1815" y="181" font-family="Liberation Sans" font-size="11" fill="#333" transform="rotate(14 1815 177)" text-anchor="middle">Front</text>
<text x="1857" y="175" font-family="Liberation Sans" font-size="9" font-style="italic" fill="#333" transform="rotate(-64 1855 172)" text-anchor="middle">Right</text>
<path d="M1788.3 147.4v50.5" stroke="#2a2aa8" stroke-width="1.3"/>
<path d="M1788.3 197.5l50 14.8" stroke="#d23030" stroke-width="1.3"/>
<path d="M1788.3 197.5l29-25" stroke="#3a9a3a" stroke-width="0.8"/>
<text x="1782" y="143" font-family="Liberation Sans" font-size="11" font-weight="bold" fill="#2a2aa8">Z</text>
<text x="1843" y="218" font-family="Liberation Sans" font-size="10" font-weight="bold" fill="#d83a3a">X</text>
</svg>
<svg class="a" style="left:1866px;top:222px" width="18" height="20" viewBox="0 0 18 20"><path d="M1 5l8-4 8 4v10l-8 4-8-4z" fill="#ddd" stroke="#333" stroke-width="1.1"/><path d="M1 5l8 4 8-4M9 9v10" fill="none" stroke="#333" stroke-width="1"/><path d="M1.5 5.5l7.5 3.8v9.2L1.5 14.7z" fill="#999"/></svg>
<svg class="a" style="left:1891px;top:230px" width="9" height="5" viewBox="0 0 9 5"><path d="M0 0h9L4.5 5z" fill="#333"/></svg>

</body></html>
